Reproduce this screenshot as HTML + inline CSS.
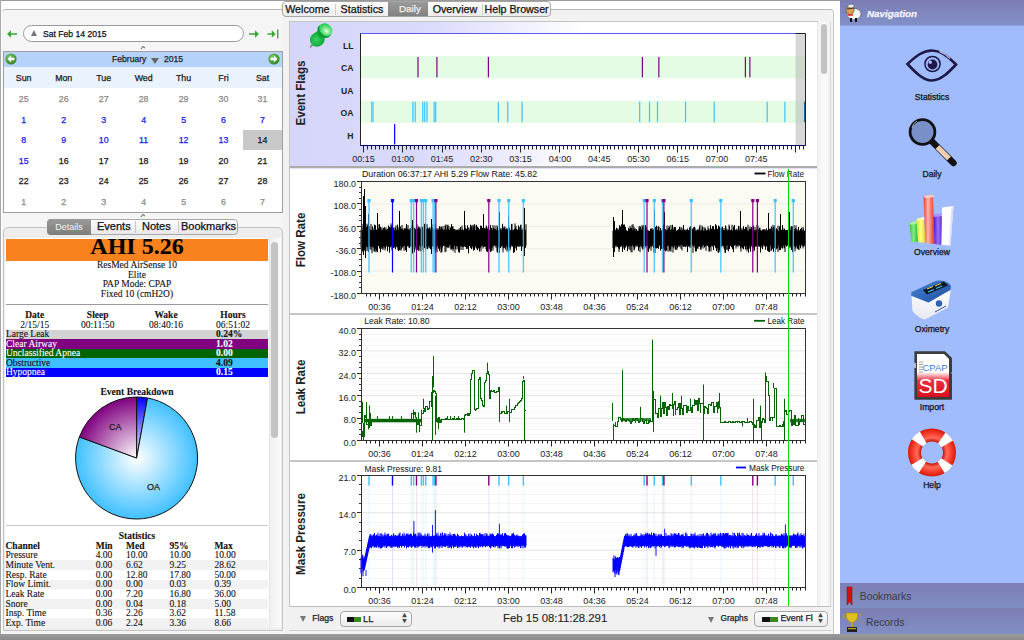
<!DOCTYPE html><html><head><meta charset="utf-8"><style>
*{margin:0;padding:0;box-sizing:border-box}
html,body{width:1024px;height:640px;overflow:hidden;background:#fff;font-family:'Liberation Sans', sans-serif;}
.abs{position:absolute}
.t{position:absolute;white-space:nowrap;line-height:1;-webkit-text-stroke:0.25px currentColor}
text{-webkit-text-stroke:0.25px currentColor}
</style></head><body>

<div class="abs" style="left:0;top:0;width:1024px;height:1px;background:#9a9a9a"></div>
<div class="abs" style="left:0;top:0;width:1px;height:640px;background:#a8a8a8"></div>
<div class="abs" style="left:0;top:634px;width:1024px;height:6px;background:linear-gradient(#9c9c9c,#8a8a8a)"></div>
<div class="abs" style="left:2px;top:9px;width:281px;height:625px;background:#f5f5f5;border-top:1px solid #b4b4b4;border-radius:4px 0 0 0"></div>
<svg class="abs" style="left:6px;top:29px" width="12" height="10" viewBox="0 0 12 10"><path d="M1 5 L5 1.2 L5 4.3 L11 4.3 L11 5.7 L5 5.7 L5 8.8 Z" fill="#38a838"/></svg>
<div class="abs" style="left:23px;top:25px;width:221px;height:17px;border:1px solid #9a9a9a;border-radius:9px;background:#fff"></div>
<div class="abs" style="left:31px;top:30px;width:0;height:0;border-left:3.5px solid transparent;border-right:3.5px solid transparent;border-bottom:6px solid #777"></div>
<div class="t" style="left:43px;top:29.5px;font-size:8.6px;color:#111">Sat Feb 14 2015</div>
<svg class="abs" style="left:248px;top:29px" width="12" height="10" viewBox="0 0 12 10"><path d="M11 5 L7 1.2 L7 4.3 L1 4.3 L1 5.7 L7 5.7 L7 8.8 Z" fill="#38a838"/></svg>
<svg class="abs" style="left:267px;top:29px" width="13" height="10" viewBox="0 0 13 10"><path d="M8.6 5 L4.8 1.2 L4.8 4.3 L0.5 4.3 L0.5 5.7 L4.8 5.7 L4.8 8.8 Z" fill="#38a838"/><rect x="10" y="0.5" width="1.4" height="9" fill="#38a838"/></svg>
<div class="abs" style="left:3px;top:51px;width:280px;height:162px;border:1px solid #a0a0a0;background:#fff"></div>
<div class="abs" style="left:4px;top:52px;width:278px;height:15px;background:#b4d2fa"></div>
<div class="abs" style="left:4px;top:67px;width:278px;height:21px;background:#eaf2fd"></div>
<svg class="abs" style="left:5px;top:53px" width="12" height="12" viewBox="0 0 12 12"><defs><radialGradient id="g11" cx="40%" cy="35%" r="70%"><stop offset="0" stop-color="#7fd06a"/><stop offset="1" stop-color="#2f7d1e"/></radialGradient></defs><circle cx="6" cy="6" r="5.6" fill="url(#g11)"/><path d="M2.5 6 L6 2.8 L6 4.8 L9.5 4.8 L9.5 7.2 L6 7.2 L6 9.2 Z" fill="#fff"/></svg>
<svg class="abs" style="left:268px;top:53px" width="12" height="12" viewBox="0 0 12 12"><defs><radialGradient id="g274" cx="40%" cy="35%" r="70%"><stop offset="0" stop-color="#7fd06a"/><stop offset="1" stop-color="#2f7d1e"/></radialGradient></defs><circle cx="6" cy="6" r="5.6" fill="url(#g274)"/><path d="M9.5 6 L6 2.8 L6 4.8 L2.5 4.8 L2.5 7.2 L6 7.2 L6 9.2 Z" fill="#fff"/></svg>
<div class="t" style="left:112px;top:55.3px;font-size:8.6px;color:#222">February</div>
<div class="abs" style="left:151px;top:58px;width:0;height:0;border-left:4px solid transparent;border-right:4px solid transparent;border-top:6px solid #666"></div>
<div class="t" style="left:164px;top:55.3px;font-size:8.6px;color:#222">2015</div>
<div class="t" style="left:3.6999999999999993px;width:40px;text-align:center;top:74.1px;font-size:8.8px;color:#1a1a1a">Sun</div>
<div class="t" style="left:43.7px;width:40px;text-align:center;top:74.1px;font-size:8.8px;color:#1a1a1a">Mon</div>
<div class="t" style="left:83.7px;width:40px;text-align:center;top:74.1px;font-size:8.8px;color:#1a1a1a">Tue</div>
<div class="t" style="left:123.6px;width:40px;text-align:center;top:74.1px;font-size:8.8px;color:#1a1a1a">Wed</div>
<div class="t" style="left:163.6px;width:40px;text-align:center;top:74.1px;font-size:8.8px;color:#1a1a1a">Thu</div>
<div class="t" style="left:203.5px;width:40px;text-align:center;top:74.1px;font-size:8.8px;color:#1a1a1a">Fri</div>
<div class="t" style="left:242.5px;width:40px;text-align:center;top:74.1px;font-size:8.8px;color:#1a1a1a">Sat</div>
<div class="abs" style="left:243px;top:130px;width:39px;height:20px;background:#c8c8c8"></div>
<div class="t" style="left:3.6999999999999993px;width:40px;text-align:center;top:95.2px;font-size:8.8px;color:#8a8a8a">25</div>
<div class="t" style="left:43.7px;width:40px;text-align:center;top:95.2px;font-size:8.8px;color:#8a8a8a">26</div>
<div class="t" style="left:83.7px;width:40px;text-align:center;top:95.2px;font-size:8.8px;color:#8a8a8a">27</div>
<div class="t" style="left:123.6px;width:40px;text-align:center;top:95.2px;font-size:8.8px;color:#8a8a8a">28</div>
<div class="t" style="left:163.6px;width:40px;text-align:center;top:95.2px;font-size:8.8px;color:#8a8a8a">29</div>
<div class="t" style="left:203.5px;width:40px;text-align:center;top:95.2px;font-size:8.8px;color:#8a8a8a">30</div>
<div class="t" style="left:242.5px;width:40px;text-align:center;top:95.2px;font-size:8.8px;color:#8a8a8a">31</div>
<div class="t" style="left:3.6999999999999993px;width:40px;text-align:center;top:115.8px;font-size:8.8px;color:#1a1aee">1</div>
<div class="t" style="left:43.7px;width:40px;text-align:center;top:115.8px;font-size:8.8px;color:#1a1aee">2</div>
<div class="t" style="left:83.7px;width:40px;text-align:center;top:115.8px;font-size:8.8px;color:#1a1aee">3</div>
<div class="t" style="left:123.6px;width:40px;text-align:center;top:115.8px;font-size:8.8px;color:#1a1aee">4</div>
<div class="t" style="left:163.6px;width:40px;text-align:center;top:115.8px;font-size:8.8px;color:#1a1aee">5</div>
<div class="t" style="left:203.5px;width:40px;text-align:center;top:115.8px;font-size:8.8px;color:#1a1aee">6</div>
<div class="t" style="left:242.5px;width:40px;text-align:center;top:115.8px;font-size:8.8px;color:#1a1aee">7</div>
<div class="t" style="left:3.6999999999999993px;width:40px;text-align:center;top:136.3px;font-size:8.8px;color:#1a1aee">8</div>
<div class="t" style="left:43.7px;width:40px;text-align:center;top:136.3px;font-size:8.8px;color:#1a1aee">9</div>
<div class="t" style="left:83.7px;width:40px;text-align:center;top:136.3px;font-size:8.8px;color:#1a1aee">10</div>
<div class="t" style="left:123.6px;width:40px;text-align:center;top:136.3px;font-size:8.8px;color:#1a1aee">11</div>
<div class="t" style="left:163.6px;width:40px;text-align:center;top:136.3px;font-size:8.8px;color:#1a1aee">12</div>
<div class="t" style="left:203.5px;width:40px;text-align:center;top:136.3px;font-size:8.8px;color:#1a1aee">13</div>
<div class="t" style="left:242.5px;width:40px;text-align:center;top:136.3px;font-size:8.8px;color:#151515">14</div>
<div class="t" style="left:3.6999999999999993px;width:40px;text-align:center;top:156.8px;font-size:8.8px;color:#1a1aee">15</div>
<div class="t" style="left:43.7px;width:40px;text-align:center;top:156.8px;font-size:8.8px;color:#151515">16</div>
<div class="t" style="left:83.7px;width:40px;text-align:center;top:156.8px;font-size:8.8px;color:#151515">17</div>
<div class="t" style="left:123.6px;width:40px;text-align:center;top:156.8px;font-size:8.8px;color:#151515">18</div>
<div class="t" style="left:163.6px;width:40px;text-align:center;top:156.8px;font-size:8.8px;color:#151515">19</div>
<div class="t" style="left:203.5px;width:40px;text-align:center;top:156.8px;font-size:8.8px;color:#151515">20</div>
<div class="t" style="left:242.5px;width:40px;text-align:center;top:156.8px;font-size:8.8px;color:#151515">21</div>
<div class="t" style="left:3.6999999999999993px;width:40px;text-align:center;top:177.4px;font-size:8.8px;color:#151515">22</div>
<div class="t" style="left:43.7px;width:40px;text-align:center;top:177.4px;font-size:8.8px;color:#151515">23</div>
<div class="t" style="left:83.7px;width:40px;text-align:center;top:177.4px;font-size:8.8px;color:#151515">24</div>
<div class="t" style="left:123.6px;width:40px;text-align:center;top:177.4px;font-size:8.8px;color:#151515">25</div>
<div class="t" style="left:163.6px;width:40px;text-align:center;top:177.4px;font-size:8.8px;color:#151515">26</div>
<div class="t" style="left:203.5px;width:40px;text-align:center;top:177.4px;font-size:8.8px;color:#151515">27</div>
<div class="t" style="left:242.5px;width:40px;text-align:center;top:177.4px;font-size:8.8px;color:#151515">28</div>
<div class="t" style="left:3.6999999999999993px;width:40px;text-align:center;top:198.0px;font-size:8.8px;color:#8a8a8a">1</div>
<div class="t" style="left:43.7px;width:40px;text-align:center;top:198.0px;font-size:8.8px;color:#8a8a8a">2</div>
<div class="t" style="left:83.7px;width:40px;text-align:center;top:198.0px;font-size:8.8px;color:#8a8a8a">3</div>
<div class="t" style="left:123.6px;width:40px;text-align:center;top:198.0px;font-size:8.8px;color:#8a8a8a">4</div>
<div class="t" style="left:163.6px;width:40px;text-align:center;top:198.0px;font-size:8.8px;color:#8a8a8a">5</div>
<div class="t" style="left:203.5px;width:40px;text-align:center;top:198.0px;font-size:8.8px;color:#8a8a8a">6</div>
<div class="t" style="left:242.5px;width:40px;text-align:center;top:198.0px;font-size:8.8px;color:#8a8a8a">7</div>
<svg class="abs" style="left:140px;top:45px" width="6" height="5"><path d="M1 4 L3 1.5 L5 3" stroke="#777" stroke-width="1.1" fill="none"/></svg>
<svg class="abs" style="left:140px;top:213px" width="6" height="5"><path d="M1 4 L3 1.5 L5 3" stroke="#777" stroke-width="1.1" fill="none"/></svg>
<div class="abs" style="left:3px;top:227px;width:280px;height:404px;border:1px solid #c4c4c4;border-radius:5px 5px 0 0;background:#ededed"></div>
<div class="abs" style="left:47px;top:219px;width:191px;height:16px;border:1px solid #a8a8a8;border-radius:4px;background:linear-gradient(#fdfdfd,#e8e8e8)"></div>
<div class="abs" style="left:47px;top:219px;width:44px;height:16px;border-radius:4px 0 0 4px;background:linear-gradient(#9a9a9a,#7d7d7d)"></div>
<div class="t" style="left:47px;width:44px;text-align:center;top:222.5px;font-size:9px;color:#f4f4f4;-webkit-text-stroke:0">Details</div>
<div class="t" style="left:97px;top:221px;font-size:11px;color:#111">Events</div>
<div class="abs" style="left:135px;top:221px;width:1px;height:12px;background:#c8c8c8"></div>
<div class="t" style="left:142px;top:221px;font-size:11px;color:#111">Notes</div>
<div class="abs" style="left:178px;top:221px;width:1px;height:12px;background:#c8c8c8"></div>
<div class="t" style="left:181px;top:221px;font-size:11px;color:#111">Bookmarks</div>
<div class="abs" style="left:5px;top:238px;width:276px;height:390px;background:#fff"></div>
<div class="abs" style="left:269px;top:238px;width:12px;height:390px;background:linear-gradient(90deg,#f0f0f0,#fafafa);border-left:1px solid #e4e4e4"></div>
<div class="abs" style="left:271px;top:242px;width:7px;height:196px;border-radius:4px;background:#c3c3c3"></div>
<div class="abs" style="left:6px;top:239px;width:262px;height:22px;background:#fa821e"></div>
<div class="t" style="left:6px;width:262px;text-align:center;top:234px;font-family:'Liberation Serif', serif;-webkit-text-stroke:0.1px currentColor;font-weight:bold;font-size:24px;color:#000">AHI 5.26</div>
<div class="t" style="left:6px;width:262px;text-align:center;top:260.0px;font-family:'Liberation Serif', serif;-webkit-text-stroke:0.1px currentColor;margin-top:1px;font-size:9.5px;color:#111">ResMed AirSense 10</div>
<div class="t" style="left:6px;width:262px;text-align:center;top:269.6px;font-family:'Liberation Serif', serif;-webkit-text-stroke:0.1px currentColor;margin-top:1px;font-size:9.5px;color:#111">Elite</div>
<div class="t" style="left:6px;width:262px;text-align:center;top:279.2px;font-family:'Liberation Serif', serif;-webkit-text-stroke:0.1px currentColor;margin-top:1px;font-size:9.5px;color:#111">PAP Mode: CPAP</div>
<div class="t" style="left:6px;width:262px;text-align:center;top:288.8px;font-family:'Liberation Serif', serif;-webkit-text-stroke:0.1px currentColor;margin-top:1px;font-size:9.5px;color:#111">Fixed 10 (cmH2O)</div>
<div class="abs" style="left:6px;top:304px;width:262px;height:1px;background:#9a9a9a"></div>
<div class="t" style="left:-5.299999999999997px;width:80px;text-align:center;top:310px;font-family:'Liberation Serif', serif;-webkit-text-stroke:0.1px currentColor;margin-top:1px;font-weight:bold;font-size:9.5px;color:#111">Date</div>
<div class="t" style="left:-5.299999999999997px;width:80px;text-align:center;top:319.5px;font-family:'Liberation Serif', serif;-webkit-text-stroke:0.1px currentColor;margin-top:1px;font-size:9.5px;color:#111">2/15/15</div>
<div class="t" style="left:57.7px;width:80px;text-align:center;top:310px;font-family:'Liberation Serif', serif;-webkit-text-stroke:0.1px currentColor;margin-top:1px;font-weight:bold;font-size:9.5px;color:#111">Sleep</div>
<div class="t" style="left:57.7px;width:80px;text-align:center;top:319.5px;font-family:'Liberation Serif', serif;-webkit-text-stroke:0.1px currentColor;margin-top:1px;font-size:9.5px;color:#111">00:11:50</div>
<div class="t" style="left:126px;width:80px;text-align:center;top:310px;font-family:'Liberation Serif', serif;-webkit-text-stroke:0.1px currentColor;margin-top:1px;font-weight:bold;font-size:9.5px;color:#111">Wake</div>
<div class="t" style="left:126px;width:80px;text-align:center;top:319.5px;font-family:'Liberation Serif', serif;-webkit-text-stroke:0.1px currentColor;margin-top:1px;font-size:9.5px;color:#111">08:40:16</div>
<div class="t" style="left:193px;width:80px;text-align:center;top:310px;font-family:'Liberation Serif', serif;-webkit-text-stroke:0.1px currentColor;margin-top:1px;font-weight:bold;font-size:9.5px;color:#111">Hours</div>
<div class="t" style="left:193px;width:80px;text-align:center;top:319.5px;font-family:'Liberation Serif', serif;-webkit-text-stroke:0.1px currentColor;margin-top:1px;font-size:9.5px;color:#111">06:51:02</div>
<div class="abs" style="left:6px;top:329.7px;width:262px;height:9.6px;background:#d3d3d3"></div>
<div class="t" style="left:6px;top:329.1px;font-family:'Liberation Serif', serif;-webkit-text-stroke:0.1px currentColor;margin-top:1px;font-size:9.5px;color:#111">Large Leak</div>
<div class="t" style="left:216px;top:329.1px;font-family:'Liberation Serif', serif;-webkit-text-stroke:0.1px currentColor;margin-top:1px;font-weight:bold;font-size:9.5px;color:#111">0.24%</div>
<div class="abs" style="left:6px;top:339.2px;width:262px;height:9.6px;background:#800080"></div>
<div class="t" style="left:6px;top:338.6px;font-family:'Liberation Serif', serif;-webkit-text-stroke:0.1px currentColor;margin-top:1px;font-size:9.5px;color:#fff">Clear Airway</div>
<div class="t" style="left:216px;top:338.6px;font-family:'Liberation Serif', serif;-webkit-text-stroke:0.1px currentColor;margin-top:1px;font-weight:bold;font-size:9.5px;color:#fff">1.02</div>
<div class="abs" style="left:6px;top:348.7px;width:262px;height:9.6px;background:#006400"></div>
<div class="t" style="left:6px;top:348.1px;font-family:'Liberation Serif', serif;-webkit-text-stroke:0.1px currentColor;margin-top:1px;font-size:9.5px;color:#fff">Unclassified Apnea</div>
<div class="t" style="left:216px;top:348.1px;font-family:'Liberation Serif', serif;-webkit-text-stroke:0.1px currentColor;margin-top:1px;font-weight:bold;font-size:9.5px;color:#fff">0.00</div>
<div class="abs" style="left:6px;top:358.1px;width:262px;height:9.6px;background:#40c0ff"></div>
<div class="t" style="left:6px;top:357.5px;font-family:'Liberation Serif', serif;-webkit-text-stroke:0.1px currentColor;margin-top:1px;font-size:9.5px;color:#111">Obstructive</div>
<div class="t" style="left:216px;top:357.5px;font-family:'Liberation Serif', serif;-webkit-text-stroke:0.1px currentColor;margin-top:1px;font-weight:bold;font-size:9.5px;color:#111">4.09</div>
<div class="abs" style="left:6px;top:367.6px;width:262px;height:9.6px;background:#0000ff"></div>
<div class="t" style="left:6px;top:367.0px;font-family:'Liberation Serif', serif;-webkit-text-stroke:0.1px currentColor;margin-top:1px;font-size:9.5px;color:#fff">Hypopnea</div>
<div class="t" style="left:216px;top:367.0px;font-family:'Liberation Serif', serif;-webkit-text-stroke:0.1px currentColor;margin-top:1px;font-weight:bold;font-size:9.5px;color:#fff">0.15</div>
<div class="t" style="left:6px;width:262px;text-align:center;top:386.5px;font-family:'Liberation Serif', serif;-webkit-text-stroke:0.1px currentColor;margin-top:1px;font-weight:bold;font-size:9.5px;color:#111">Event Breakdown</div>
<svg class="abs" style="left:0;top:0" width="280" height="640">
<defs>
<radialGradient id="pgOA" gradientUnits="userSpaceOnUse" cx="136.6" cy="458" r="61"><stop offset="0" stop-color="#ffffff"/><stop offset="1" stop-color="#40c0ff"/></radialGradient>
<radialGradient id="pgCA" gradientUnits="userSpaceOnUse" cx="136.6" cy="458" r="61"><stop offset="0" stop-color="#ffffff"/><stop offset="1" stop-color="#800080"/></radialGradient>
<radialGradient id="pgH" gradientUnits="userSpaceOnUse" cx="136.6" cy="458" r="61"><stop offset="0" stop-color="#ffffff"/><stop offset="1" stop-color="#0000ff"/></radialGradient>
</defs>
<path d="M136.6,458 L136.60,397.00 A61,61 0 0 1 147.51,397.98 Z" fill="url(#pgH)" stroke="#111" stroke-width="1"/>
<path d="M136.6,458 L147.51,397.98 A61,61 0 1 1 79.35,436.94 Z" fill="url(#pgOA)" stroke="#111" stroke-width="1"/>
<path d="M136.6,458 L79.35,436.94 A61,61 0 0 1 136.60,397.00 Z" fill="url(#pgCA)" stroke="#111" stroke-width="1"/>
</svg>
<div class="t" style="left:109px;top:423px;font-size:9px;color:#222">CA</div>
<div class="t" style="left:147px;top:483px;font-size:9px;color:#222">OA</div>
<div class="abs" style="left:6px;top:525px;width:262px;height:1px;background:#c8c8c8"></div>
<div class="t" style="left:6px;width:262px;text-align:center;top:531px;font-family:'Liberation Serif', serif;-webkit-text-stroke:0.1px currentColor;margin-top:1px;font-weight:bold;font-size:9.5px;color:#111">Statistics</div>
<div class="t" style="left:5.5px;top:540.7px;font-family:'Liberation Serif', serif;-webkit-text-stroke:0.1px currentColor;margin-top:1px;font-weight:bold;font-size:9.5px;color:#111">Channel</div>
<div class="t" style="left:95.7px;top:540.7px;font-family:'Liberation Serif', serif;-webkit-text-stroke:0.1px currentColor;margin-top:1px;font-weight:bold;font-size:9.5px;color:#111">Min</div>
<div class="t" style="left:126px;top:540.7px;font-family:'Liberation Serif', serif;-webkit-text-stroke:0.1px currentColor;margin-top:1px;font-weight:bold;font-size:9.5px;color:#111">Med</div>
<div class="t" style="left:169.4px;top:540.7px;font-family:'Liberation Serif', serif;-webkit-text-stroke:0.1px currentColor;margin-top:1px;font-weight:bold;font-size:9.5px;color:#111">95%</div>
<div class="t" style="left:214.4px;top:540.7px;font-family:'Liberation Serif', serif;-webkit-text-stroke:0.1px currentColor;margin-top:1px;font-weight:bold;font-size:9.5px;color:#111">Max</div>
<div class="t" style="left:5.5px;top:550.4px;font-family:'Liberation Serif', serif;-webkit-text-stroke:0.1px currentColor;margin-top:1px;font-weight:normal;font-size:9.5px;color:#111">Pressure</div>
<div class="t" style="left:95.7px;top:550.4px;font-family:'Liberation Serif', serif;-webkit-text-stroke:0.1px currentColor;margin-top:1px;font-weight:normal;font-size:9.5px;color:#111">4.00</div>
<div class="t" style="left:126px;top:550.4px;font-family:'Liberation Serif', serif;-webkit-text-stroke:0.1px currentColor;margin-top:1px;font-weight:normal;font-size:9.5px;color:#111">10.00</div>
<div class="t" style="left:169.4px;top:550.4px;font-family:'Liberation Serif', serif;-webkit-text-stroke:0.1px currentColor;margin-top:1px;font-weight:normal;font-size:9.5px;color:#111">10.00</div>
<div class="t" style="left:214.4px;top:550.4px;font-family:'Liberation Serif', serif;-webkit-text-stroke:0.1px currentColor;margin-top:1px;font-weight:normal;font-size:9.5px;color:#111">10.00</div>
<div class="abs" style="left:6px;top:560.3px;width:262px;height:9.6px;background:#f2f2f2"></div>
<div class="t" style="left:5.5px;top:560.0px;font-family:'Liberation Serif', serif;-webkit-text-stroke:0.1px currentColor;margin-top:1px;font-weight:normal;font-size:9.5px;color:#111">Minute Vent.</div>
<div class="t" style="left:95.7px;top:560.0px;font-family:'Liberation Serif', serif;-webkit-text-stroke:0.1px currentColor;margin-top:1px;font-weight:normal;font-size:9.5px;color:#111">0.00</div>
<div class="t" style="left:126px;top:560.0px;font-family:'Liberation Serif', serif;-webkit-text-stroke:0.1px currentColor;margin-top:1px;font-weight:normal;font-size:9.5px;color:#111">6.62</div>
<div class="t" style="left:169.4px;top:560.0px;font-family:'Liberation Serif', serif;-webkit-text-stroke:0.1px currentColor;margin-top:1px;font-weight:normal;font-size:9.5px;color:#111">9.25</div>
<div class="t" style="left:214.4px;top:560.0px;font-family:'Liberation Serif', serif;-webkit-text-stroke:0.1px currentColor;margin-top:1px;font-weight:normal;font-size:9.5px;color:#111">28.62</div>
<div class="t" style="left:5.5px;top:569.7px;font-family:'Liberation Serif', serif;-webkit-text-stroke:0.1px currentColor;margin-top:1px;font-weight:normal;font-size:9.5px;color:#111">Resp. Rate</div>
<div class="t" style="left:95.7px;top:569.7px;font-family:'Liberation Serif', serif;-webkit-text-stroke:0.1px currentColor;margin-top:1px;font-weight:normal;font-size:9.5px;color:#111">0.00</div>
<div class="t" style="left:126px;top:569.7px;font-family:'Liberation Serif', serif;-webkit-text-stroke:0.1px currentColor;margin-top:1px;font-weight:normal;font-size:9.5px;color:#111">12.80</div>
<div class="t" style="left:169.4px;top:569.7px;font-family:'Liberation Serif', serif;-webkit-text-stroke:0.1px currentColor;margin-top:1px;font-weight:normal;font-size:9.5px;color:#111">17.80</div>
<div class="t" style="left:214.4px;top:569.7px;font-family:'Liberation Serif', serif;-webkit-text-stroke:0.1px currentColor;margin-top:1px;font-weight:normal;font-size:9.5px;color:#111">50.00</div>
<div class="abs" style="left:6px;top:579.6px;width:262px;height:9.6px;background:#f2f2f2"></div>
<div class="t" style="left:5.5px;top:579.3px;font-family:'Liberation Serif', serif;-webkit-text-stroke:0.1px currentColor;margin-top:1px;font-weight:normal;font-size:9.5px;color:#111">Flow Limit.</div>
<div class="t" style="left:95.7px;top:579.3px;font-family:'Liberation Serif', serif;-webkit-text-stroke:0.1px currentColor;margin-top:1px;font-weight:normal;font-size:9.5px;color:#111">0.00</div>
<div class="t" style="left:126px;top:579.3px;font-family:'Liberation Serif', serif;-webkit-text-stroke:0.1px currentColor;margin-top:1px;font-weight:normal;font-size:9.5px;color:#111">0.00</div>
<div class="t" style="left:169.4px;top:579.3px;font-family:'Liberation Serif', serif;-webkit-text-stroke:0.1px currentColor;margin-top:1px;font-weight:normal;font-size:9.5px;color:#111">0.03</div>
<div class="t" style="left:214.4px;top:579.3px;font-family:'Liberation Serif', serif;-webkit-text-stroke:0.1px currentColor;margin-top:1px;font-weight:normal;font-size:9.5px;color:#111">0.39</div>
<div class="t" style="left:5.5px;top:589.0px;font-family:'Liberation Serif', serif;-webkit-text-stroke:0.1px currentColor;margin-top:1px;font-weight:normal;font-size:9.5px;color:#111">Leak Rate</div>
<div class="t" style="left:95.7px;top:589.0px;font-family:'Liberation Serif', serif;-webkit-text-stroke:0.1px currentColor;margin-top:1px;font-weight:normal;font-size:9.5px;color:#111">0.00</div>
<div class="t" style="left:126px;top:589.0px;font-family:'Liberation Serif', serif;-webkit-text-stroke:0.1px currentColor;margin-top:1px;font-weight:normal;font-size:9.5px;color:#111">7.20</div>
<div class="t" style="left:169.4px;top:589.0px;font-family:'Liberation Serif', serif;-webkit-text-stroke:0.1px currentColor;margin-top:1px;font-weight:normal;font-size:9.5px;color:#111">16.80</div>
<div class="t" style="left:214.4px;top:589.0px;font-family:'Liberation Serif', serif;-webkit-text-stroke:0.1px currentColor;margin-top:1px;font-weight:normal;font-size:9.5px;color:#111">36.00</div>
<div class="abs" style="left:6px;top:599.0px;width:262px;height:9.6px;background:#f2f2f2"></div>
<div class="t" style="left:5.5px;top:598.7px;font-family:'Liberation Serif', serif;-webkit-text-stroke:0.1px currentColor;margin-top:1px;font-weight:normal;font-size:9.5px;color:#111">Snore</div>
<div class="t" style="left:95.7px;top:598.7px;font-family:'Liberation Serif', serif;-webkit-text-stroke:0.1px currentColor;margin-top:1px;font-weight:normal;font-size:9.5px;color:#111">0.00</div>
<div class="t" style="left:126px;top:598.7px;font-family:'Liberation Serif', serif;-webkit-text-stroke:0.1px currentColor;margin-top:1px;font-weight:normal;font-size:9.5px;color:#111">0.04</div>
<div class="t" style="left:169.4px;top:598.7px;font-family:'Liberation Serif', serif;-webkit-text-stroke:0.1px currentColor;margin-top:1px;font-weight:normal;font-size:9.5px;color:#111">0.18</div>
<div class="t" style="left:214.4px;top:598.7px;font-family:'Liberation Serif', serif;-webkit-text-stroke:0.1px currentColor;margin-top:1px;font-weight:normal;font-size:9.5px;color:#111">5.00</div>
<div class="t" style="left:5.5px;top:608.3px;font-family:'Liberation Serif', serif;-webkit-text-stroke:0.1px currentColor;margin-top:1px;font-weight:normal;font-size:9.5px;color:#111">Insp. Time</div>
<div class="t" style="left:95.7px;top:608.3px;font-family:'Liberation Serif', serif;-webkit-text-stroke:0.1px currentColor;margin-top:1px;font-weight:normal;font-size:9.5px;color:#111">0.36</div>
<div class="t" style="left:126px;top:608.3px;font-family:'Liberation Serif', serif;-webkit-text-stroke:0.1px currentColor;margin-top:1px;font-weight:normal;font-size:9.5px;color:#111">2.26</div>
<div class="t" style="left:169.4px;top:608.3px;font-family:'Liberation Serif', serif;-webkit-text-stroke:0.1px currentColor;margin-top:1px;font-weight:normal;font-size:9.5px;color:#111">3.62</div>
<div class="t" style="left:214.4px;top:608.3px;font-family:'Liberation Serif', serif;-webkit-text-stroke:0.1px currentColor;margin-top:1px;font-weight:normal;font-size:9.5px;color:#111">11.58</div>
<div class="abs" style="left:6px;top:618.3px;width:262px;height:9.6px;background:#f2f2f2"></div>
<div class="t" style="left:5.5px;top:618.0px;font-family:'Liberation Serif', serif;-webkit-text-stroke:0.1px currentColor;margin-top:1px;font-weight:normal;font-size:9.5px;color:#111">Exp. Time</div>
<div class="t" style="left:95.7px;top:618.0px;font-family:'Liberation Serif', serif;-webkit-text-stroke:0.1px currentColor;margin-top:1px;font-weight:normal;font-size:9.5px;color:#111">0.06</div>
<div class="t" style="left:126px;top:618.0px;font-family:'Liberation Serif', serif;-webkit-text-stroke:0.1px currentColor;margin-top:1px;font-weight:normal;font-size:9.5px;color:#111">2.24</div>
<div class="t" style="left:169.4px;top:618.0px;font-family:'Liberation Serif', serif;-webkit-text-stroke:0.1px currentColor;margin-top:1px;font-weight:normal;font-size:9.5px;color:#111">3.36</div>
<div class="t" style="left:214.4px;top:618.0px;font-family:'Liberation Serif', serif;-webkit-text-stroke:0.1px currentColor;margin-top:1px;font-weight:normal;font-size:9.5px;color:#111">8.66</div>
<div class="abs" style="left:283px;top:9px;width:551px;height:625px;background:#f2f2f2;border-top:1px solid #b8b8b8;border-right:1px solid #c8c8c8;border-radius:4px 4px 0 0"></div>
<div class="abs" style="left:834px;top:1px;width:6px;height:633px;background:#fff"></div>
<div class="abs" style="left:282px;top:1px;width:269px;height:16px;border:1px solid #a6a6a6;border-radius:4px;background:linear-gradient(#fefefe,#ececec)"></div>
<div class="abs" style="left:388px;top:2px;width:40px;height:14px;background:linear-gradient(#9a9a9a,#808080)"></div>
<div class="t" style="left:285.2px;top:3.5px;font-size:10.7px;color:#111">Welcome</div>
<div class="t" style="left:340.6px;top:3.5px;font-size:10.7px;color:#111">Statistics</div>
<div class="t" style="left:399px;top:3.5px;font-size:9.8px;color:#f0f0f0">Daily</div>
<div class="t" style="left:432.7px;top:3.5px;font-size:10.7px;color:#111">Overview</div>
<div class="t" style="left:484.5px;top:3.5px;font-size:10.7px;color:#111">Help Browser</div>
<div class="abs" style="left:334.5px;top:4px;width:1px;height:11px;background:#cfcfcf"></div>
<div class="abs" style="left:482px;top:4px;width:1px;height:11px;background:#cfcfcf"></div>
<div class="abs" style="left:289px;top:21px;width:529px;height:586px;border-left:1px solid #c4c4c4;border-top:1px solid #c4c4c4;background:#fff"></div>
<div class="abs" style="left:817px;top:22px;width:14px;height:584px;background:linear-gradient(90deg,#f2f2f2,#fbfbfb 60%,#f0f0f0);border-left:1px solid #e6e6e6;border-right:1px solid #d8d8d8"></div>
<div class="abs" style="left:821px;top:23.5px;width:6px;height:50px;border-radius:3px;background:#c2c2c2"></div>
<div class="abs" style="left:290px;top:22px;width:527px;height:144px;background:linear-gradient(90deg,#d6d6fb 0%,#d9d9fb 24%,#e8e8fd 38%,#f8f8ff 50%,#ffffff 56%)"></div>
<div class="abs" style="left:290px;top:166px;width:527px;height:2px;background:#acacac"></div>
<div class="abs" style="left:290px;top:168px;width:527px;height:1px;background:#e2e2fa"></div>
<div class="abs" style="left:290px;top:313px;width:527px;height:1.5px;background:#c6c6c6"></div>
<div class="abs" style="left:290px;top:460px;width:527px;height:1.5px;background:#c6c6c6"></div>
<div class="abs" style="left:289px;top:606px;width:542px;height:25px;background:#f1f1f1;border-top:1px solid #bdbdbd;border-bottom:1px solid #d0d0d0"></div>
<svg class="abs" style="left:0;top:0;font-family:'Liberation Sans', sans-serif" width="1024" height="640"><rect x="360.5" y="33.5" width="445.0" height="112.0" fill="#fff"/><rect x="361.0" y="55.90" width="444.0" height="22.40" fill="#e4fce4"/><rect x="361.0" y="100.70" width="444.0" height="22.40" fill="#e4fce4"/><rect x="795.5" y="33.5" width="10" height="112.0" fill="#b0b0b0" fill-opacity="0.5"/><rect x="371.17" y="101.70" width="1.2" height="20.40" fill="#40c0ff"/><rect x="394.05" y="124.10" width="1.2" height="20.40" fill="#0000ff"/><rect x="412.30" y="101.70" width="1.2" height="20.40" fill="#40c0ff"/><rect x="414.59" y="101.70" width="1.2" height="20.40" fill="#40c0ff"/><rect x="417.41" y="56.90" width="1.2" height="20.40" fill="#800080"/><rect x="422.18" y="101.70" width="1.2" height="20.40" fill="#40c0ff"/><rect x="424.13" y="101.70" width="1.2" height="20.40" fill="#40c0ff"/><rect x="426.37" y="101.70" width="1.2" height="20.40" fill="#40c0ff"/><rect x="433.57" y="101.70" width="1.2" height="20.40" fill="#40c0ff"/><rect x="435.13" y="101.70" width="1.2" height="20.40" fill="#40c0ff"/><rect x="436.30" y="56.90" width="1.2" height="20.40" fill="#800080"/><rect x="487.80" y="56.90" width="1.2" height="20.40" fill="#800080"/><rect x="497.73" y="101.70" width="1.2" height="20.40" fill="#40c0ff"/><rect x="507.17" y="101.70" width="1.2" height="20.40" fill="#40c0ff"/><rect x="521.48" y="101.70" width="1.2" height="20.40" fill="#40c0ff"/><rect x="639.08" y="101.70" width="1.2" height="20.40" fill="#40c0ff"/><rect x="641.80" y="56.90" width="1.2" height="20.40" fill="#800080"/><rect x="648.91" y="101.70" width="1.2" height="20.40" fill="#40c0ff"/><rect x="656.89" y="101.70" width="1.2" height="20.40" fill="#40c0ff"/><rect x="658.26" y="56.90" width="1.2" height="20.40" fill="#800080"/><rect x="684.93" y="101.70" width="1.2" height="20.40" fill="#40c0ff"/><rect x="713.65" y="101.70" width="1.2" height="20.40" fill="#40c0ff"/><rect x="744.80" y="56.90" width="1.2" height="20.40" fill="#800080"/><rect x="749.28" y="56.90" width="1.2" height="20.40" fill="#800080"/><rect x="766.61" y="101.70" width="1.2" height="20.40" fill="#40c0ff"/><rect x="784.23" y="101.70" width="1.2" height="20.40" fill="#40c0ff"/><rect x="372.57" y="101.70" width="1.0" height="20.40" fill="#40c0ff"/><rect x="804" y="101.70" width="1.4" height="20.40" fill="#1a6a9a"/><text x="353.5" y="49.0" font-size="8.6" text-anchor="end" font-weight="bold" fill="#222">LL</text><text x="353.5" y="71.39999999999999" font-size="8.6" text-anchor="end" font-weight="bold" fill="#222">CA</text><text x="353.5" y="93.8" font-size="8.6" text-anchor="end" font-weight="bold" fill="#222">UA</text><text x="353.5" y="116.19999999999999" font-size="8.6" text-anchor="end" font-weight="bold" fill="#222">OA</text><text x="353.5" y="138.60000000000002" font-size="8.6" text-anchor="end" font-weight="bold" fill="#222">H</text><path d="M360.5 145.5 L360.5 33.5 L805.5 33.5 L805.5 145.5 Z" fill="none" stroke="#222" stroke-width="1"/><line x1="361.0" y1="33.5" x2="795.5" y2="33.5" stroke="#5a5af8" stroke-width="1"/><line x1="360.5" y1="145.5" x2="805.5" y2="145.5" stroke="#000070" stroke-width="1.2"/><line x1="363.50" y1="145.5" x2="363.50" y2="152.5" stroke="#222" stroke-width="1"/><line x1="367.50" y1="145.5" x2="367.50" y2="149.5" stroke="#222" stroke-width="1"/><line x1="371.50" y1="145.5" x2="371.50" y2="149.5" stroke="#222" stroke-width="1"/><line x1="375.50" y1="145.5" x2="375.50" y2="149.5" stroke="#222" stroke-width="1"/><line x1="379.50" y1="145.5" x2="379.50" y2="149.5" stroke="#222" stroke-width="1"/><line x1="383.50" y1="145.5" x2="383.50" y2="149.5" stroke="#222" stroke-width="1"/><line x1="387.50" y1="145.5" x2="387.50" y2="149.5" stroke="#222" stroke-width="1"/><line x1="390.50" y1="145.5" x2="390.50" y2="149.5" stroke="#222" stroke-width="1"/><line x1="394.50" y1="145.5" x2="394.50" y2="149.5" stroke="#222" stroke-width="1"/><line x1="398.50" y1="145.5" x2="398.50" y2="149.5" stroke="#222" stroke-width="1"/><line x1="402.50" y1="145.5" x2="402.50" y2="152.5" stroke="#222" stroke-width="1"/><line x1="406.50" y1="145.5" x2="406.50" y2="149.5" stroke="#222" stroke-width="1"/><line x1="410.50" y1="145.5" x2="410.50" y2="149.5" stroke="#222" stroke-width="1"/><line x1="414.50" y1="145.5" x2="414.50" y2="149.5" stroke="#222" stroke-width="1"/><line x1="418.50" y1="145.5" x2="418.50" y2="149.5" stroke="#222" stroke-width="1"/><line x1="422.50" y1="145.5" x2="422.50" y2="149.5" stroke="#222" stroke-width="1"/><line x1="426.50" y1="145.5" x2="426.50" y2="149.5" stroke="#222" stroke-width="1"/><line x1="430.50" y1="145.5" x2="430.50" y2="149.5" stroke="#222" stroke-width="1"/><line x1="434.50" y1="145.5" x2="434.50" y2="149.5" stroke="#222" stroke-width="1"/><line x1="438.50" y1="145.5" x2="438.50" y2="149.5" stroke="#222" stroke-width="1"/><line x1="442.50" y1="145.5" x2="442.50" y2="152.5" stroke="#222" stroke-width="1"/><line x1="445.50" y1="145.5" x2="445.50" y2="149.5" stroke="#222" stroke-width="1"/><line x1="449.50" y1="145.5" x2="449.50" y2="149.5" stroke="#222" stroke-width="1"/><line x1="453.50" y1="145.5" x2="453.50" y2="149.5" stroke="#222" stroke-width="1"/><line x1="457.50" y1="145.5" x2="457.50" y2="149.5" stroke="#222" stroke-width="1"/><line x1="461.50" y1="145.5" x2="461.50" y2="149.5" stroke="#222" stroke-width="1"/><line x1="465.50" y1="145.5" x2="465.50" y2="149.5" stroke="#222" stroke-width="1"/><line x1="469.50" y1="145.5" x2="469.50" y2="149.5" stroke="#222" stroke-width="1"/><line x1="473.50" y1="145.5" x2="473.50" y2="149.5" stroke="#222" stroke-width="1"/><line x1="477.50" y1="145.5" x2="477.50" y2="149.5" stroke="#222" stroke-width="1"/><line x1="481.50" y1="145.5" x2="481.50" y2="152.5" stroke="#222" stroke-width="1"/><line x1="485.50" y1="145.5" x2="485.50" y2="149.5" stroke="#222" stroke-width="1"/><line x1="489.50" y1="145.5" x2="489.50" y2="149.5" stroke="#222" stroke-width="1"/><line x1="493.50" y1="145.5" x2="493.50" y2="149.5" stroke="#222" stroke-width="1"/><line x1="497.50" y1="145.5" x2="497.50" y2="149.5" stroke="#222" stroke-width="1"/><line x1="500.50" y1="145.5" x2="500.50" y2="149.5" stroke="#222" stroke-width="1"/><line x1="504.50" y1="145.5" x2="504.50" y2="149.5" stroke="#222" stroke-width="1"/><line x1="508.50" y1="145.5" x2="508.50" y2="149.5" stroke="#222" stroke-width="1"/><line x1="512.50" y1="145.5" x2="512.50" y2="149.5" stroke="#222" stroke-width="1"/><line x1="516.50" y1="145.5" x2="516.50" y2="149.5" stroke="#222" stroke-width="1"/><line x1="520.50" y1="145.5" x2="520.50" y2="152.5" stroke="#222" stroke-width="1"/><line x1="524.50" y1="145.5" x2="524.50" y2="149.5" stroke="#222" stroke-width="1"/><line x1="528.50" y1="145.5" x2="528.50" y2="149.5" stroke="#222" stroke-width="1"/><line x1="532.50" y1="145.5" x2="532.50" y2="149.5" stroke="#222" stroke-width="1"/><line x1="536.50" y1="145.5" x2="536.50" y2="149.5" stroke="#222" stroke-width="1"/><line x1="540.50" y1="145.5" x2="540.50" y2="149.5" stroke="#222" stroke-width="1"/><line x1="544.50" y1="145.5" x2="544.50" y2="149.5" stroke="#222" stroke-width="1"/><line x1="548.50" y1="145.5" x2="548.50" y2="149.5" stroke="#222" stroke-width="1"/><line x1="552.50" y1="145.5" x2="552.50" y2="149.5" stroke="#222" stroke-width="1"/><line x1="555.50" y1="145.5" x2="555.50" y2="149.5" stroke="#222" stroke-width="1"/><line x1="559.50" y1="145.5" x2="559.50" y2="152.5" stroke="#222" stroke-width="1"/><line x1="563.50" y1="145.5" x2="563.50" y2="149.5" stroke="#222" stroke-width="1"/><line x1="567.50" y1="145.5" x2="567.50" y2="149.5" stroke="#222" stroke-width="1"/><line x1="571.50" y1="145.5" x2="571.50" y2="149.5" stroke="#222" stroke-width="1"/><line x1="575.50" y1="145.5" x2="575.50" y2="149.5" stroke="#222" stroke-width="1"/><line x1="579.50" y1="145.5" x2="579.50" y2="149.5" stroke="#222" stroke-width="1"/><line x1="583.50" y1="145.5" x2="583.50" y2="149.5" stroke="#222" stroke-width="1"/><line x1="587.50" y1="145.5" x2="587.50" y2="149.5" stroke="#222" stroke-width="1"/><line x1="591.50" y1="145.5" x2="591.50" y2="149.5" stroke="#222" stroke-width="1"/><line x1="595.50" y1="145.5" x2="595.50" y2="149.5" stroke="#222" stroke-width="1"/><line x1="599.50" y1="145.5" x2="599.50" y2="152.5" stroke="#222" stroke-width="1"/><line x1="603.50" y1="145.5" x2="603.50" y2="149.5" stroke="#222" stroke-width="1"/><line x1="607.50" y1="145.5" x2="607.50" y2="149.5" stroke="#222" stroke-width="1"/><line x1="610.50" y1="145.5" x2="610.50" y2="149.5" stroke="#222" stroke-width="1"/><line x1="614.50" y1="145.5" x2="614.50" y2="149.5" stroke="#222" stroke-width="1"/><line x1="618.50" y1="145.5" x2="618.50" y2="149.5" stroke="#222" stroke-width="1"/><line x1="622.50" y1="145.5" x2="622.50" y2="149.5" stroke="#222" stroke-width="1"/><line x1="626.50" y1="145.5" x2="626.50" y2="149.5" stroke="#222" stroke-width="1"/><line x1="630.50" y1="145.5" x2="630.50" y2="149.5" stroke="#222" stroke-width="1"/><line x1="634.50" y1="145.5" x2="634.50" y2="149.5" stroke="#222" stroke-width="1"/><line x1="638.50" y1="145.5" x2="638.50" y2="152.5" stroke="#222" stroke-width="1"/><line x1="642.50" y1="145.5" x2="642.50" y2="149.5" stroke="#222" stroke-width="1"/><line x1="646.50" y1="145.5" x2="646.50" y2="149.5" stroke="#222" stroke-width="1"/><line x1="650.50" y1="145.5" x2="650.50" y2="149.5" stroke="#222" stroke-width="1"/><line x1="654.50" y1="145.5" x2="654.50" y2="149.5" stroke="#222" stroke-width="1"/><line x1="658.50" y1="145.5" x2="658.50" y2="149.5" stroke="#222" stroke-width="1"/><line x1="662.50" y1="145.5" x2="662.50" y2="149.5" stroke="#222" stroke-width="1"/><line x1="665.50" y1="145.5" x2="665.50" y2="149.5" stroke="#222" stroke-width="1"/><line x1="669.50" y1="145.5" x2="669.50" y2="149.5" stroke="#222" stroke-width="1"/><line x1="673.50" y1="145.5" x2="673.50" y2="149.5" stroke="#222" stroke-width="1"/><line x1="677.50" y1="145.5" x2="677.50" y2="152.5" stroke="#222" stroke-width="1"/><line x1="681.50" y1="145.5" x2="681.50" y2="149.5" stroke="#222" stroke-width="1"/><line x1="685.50" y1="145.5" x2="685.50" y2="149.5" stroke="#222" stroke-width="1"/><line x1="689.50" y1="145.5" x2="689.50" y2="149.5" stroke="#222" stroke-width="1"/><line x1="693.50" y1="145.5" x2="693.50" y2="149.5" stroke="#222" stroke-width="1"/><line x1="697.50" y1="145.5" x2="697.50" y2="149.5" stroke="#222" stroke-width="1"/><line x1="701.50" y1="145.5" x2="701.50" y2="149.5" stroke="#222" stroke-width="1"/><line x1="705.50" y1="145.5" x2="705.50" y2="149.5" stroke="#222" stroke-width="1"/><line x1="709.50" y1="145.5" x2="709.50" y2="149.5" stroke="#222" stroke-width="1"/><line x1="713.50" y1="145.5" x2="713.50" y2="149.5" stroke="#222" stroke-width="1"/><line x1="717.50" y1="145.5" x2="717.50" y2="152.5" stroke="#222" stroke-width="1"/><line x1="720.50" y1="145.5" x2="720.50" y2="149.5" stroke="#222" stroke-width="1"/><line x1="724.50" y1="145.5" x2="724.50" y2="149.5" stroke="#222" stroke-width="1"/><line x1="728.50" y1="145.5" x2="728.50" y2="149.5" stroke="#222" stroke-width="1"/><line x1="732.50" y1="145.5" x2="732.50" y2="149.5" stroke="#222" stroke-width="1"/><line x1="736.50" y1="145.5" x2="736.50" y2="149.5" stroke="#222" stroke-width="1"/><line x1="740.50" y1="145.5" x2="740.50" y2="149.5" stroke="#222" stroke-width="1"/><line x1="744.50" y1="145.5" x2="744.50" y2="149.5" stroke="#222" stroke-width="1"/><line x1="748.50" y1="145.5" x2="748.50" y2="149.5" stroke="#222" stroke-width="1"/><line x1="752.50" y1="145.5" x2="752.50" y2="149.5" stroke="#222" stroke-width="1"/><line x1="756.50" y1="145.5" x2="756.50" y2="152.5" stroke="#222" stroke-width="1"/><line x1="760.50" y1="145.5" x2="760.50" y2="149.5" stroke="#222" stroke-width="1"/><line x1="764.50" y1="145.5" x2="764.50" y2="149.5" stroke="#222" stroke-width="1"/><line x1="768.50" y1="145.5" x2="768.50" y2="149.5" stroke="#222" stroke-width="1"/><line x1="772.50" y1="145.5" x2="772.50" y2="149.5" stroke="#222" stroke-width="1"/><line x1="775.50" y1="145.5" x2="775.50" y2="149.5" stroke="#222" stroke-width="1"/><line x1="779.50" y1="145.5" x2="779.50" y2="149.5" stroke="#222" stroke-width="1"/><line x1="783.50" y1="145.5" x2="783.50" y2="149.5" stroke="#222" stroke-width="1"/><line x1="787.50" y1="145.5" x2="787.50" y2="149.5" stroke="#222" stroke-width="1"/><line x1="791.50" y1="145.5" x2="791.50" y2="149.5" stroke="#222" stroke-width="1"/><line x1="795.50" y1="145.5" x2="795.50" y2="152.5" stroke="#222" stroke-width="1"/><line x1="799.50" y1="145.5" x2="799.50" y2="149.5" stroke="#222" stroke-width="1"/><line x1="803.50" y1="145.5" x2="803.50" y2="149.5" stroke="#222" stroke-width="1"/><text x="363.5" y="162.3" font-size="9" text-anchor="middle" font-weight="normal" fill="#222">00:15</text><text x="402.78" y="162.3" font-size="9" text-anchor="middle" font-weight="normal" fill="#222">01:00</text><text x="442.06" y="162.3" font-size="9" text-anchor="middle" font-weight="normal" fill="#222">01:45</text><text x="481.34000000000003" y="162.3" font-size="9" text-anchor="middle" font-weight="normal" fill="#222">02:30</text><text x="520.62" y="162.3" font-size="9" text-anchor="middle" font-weight="normal" fill="#222">03:15</text><text x="559.9" y="162.3" font-size="9" text-anchor="middle" font-weight="normal" fill="#222">04:00</text><text x="599.1800000000001" y="162.3" font-size="9" text-anchor="middle" font-weight="normal" fill="#222">04:45</text><text x="638.46" y="162.3" font-size="9" text-anchor="middle" font-weight="normal" fill="#222">05:30</text><text x="677.74" y="162.3" font-size="9" text-anchor="middle" font-weight="normal" fill="#222">06:15</text><text x="717.02" y="162.3" font-size="9" text-anchor="middle" font-weight="normal" fill="#222">07:00</text><text x="756.3" y="162.3" font-size="9" text-anchor="middle" font-weight="normal" fill="#222">07:45</text><text transform="translate(305.3,93) rotate(-90) scale(1,1.12)" font-size="11.6" font-weight="bold" text-anchor="middle" fill="#222">Event Flags</text><rect x="361.5" y="181.5" width="444.0" height="112.0" fill="#fbfbf3"/><line x1="361.5" y1="203.90" x2="805.5" y2="203.90" stroke="#ececdf" stroke-width="1"/><line x1="361.5" y1="226.30" x2="805.5" y2="226.30" stroke="#ececdf" stroke-width="1"/><line x1="361.5" y1="248.70" x2="805.5" y2="248.70" stroke="#ececdf" stroke-width="1"/><line x1="361.5" y1="271.10" x2="805.5" y2="271.10" stroke="#ececdf" stroke-width="1"/><path d="M361.0 229.6V247.7M361.5 228.4V247.9M362.0 227.4V250.3M362.5 230.4V250.9M363.0 224.1V252.4M363.5 230.1V246.1M364.0 229.5V246.0M364.5 229.2V250.6M365.0 228.7V248.9M365.5 224.1V252.8M366.0 229.4V246.4M366.5 227.0V246.7M367.0 223.7V251.2M367.5 225.5V247.1M368.0 230.5V248.6M368.5 230.7V246.0M369.0 229.7V246.5M369.5 226.3V245.8M370.0 229.6V249.2M370.5 229.8V247.0M371.0 223.9V249.8M371.5 230.4V246.4M372.0 229.8V253.2M372.5 226.3V246.8M373.0 229.9V247.8M373.5 230.0V246.9M374.0 227.9V251.5M374.5 224.6V250.8M375.0 226.5V251.6M375.5 225.2V248.5M376.0 229.9V252.3M376.5 230.0V250.7M377.0 229.5V249.6M377.5 228.5V251.1M378.0 224.2V246.1M378.5 228.7V245.8M379.0 228.1V245.2M379.5 224.2V248.5M380.0 229.5V245.1M380.5 226.7V252.3M381.0 228.7V248.8M381.5 230.5V247.1M382.0 227.2V248.6M382.5 230.0V248.4M383.0 229.7V250.0M383.5 228.0V246.4M384.0 230.8V247.9M384.5 227.2V246.4M385.0 228.6V250.4M385.5 230.2V248.4M386.0 227.4V246.7M386.5 229.6V245.4M387.0 230.5V245.6M387.5 228.9V251.2M388.0 230.4V246.3M388.5 225.4V246.7M389.0 230.5V246.8M389.5 226.9V252.7M390.0 228.7V246.1M390.5 227.7V246.8M391.0 223.4V247.5M391.5 225.6V245.5M392.0 229.1V250.5M392.5 229.4V245.9M393.0 230.3V245.7M393.5 228.2V248.0M394.0 227.3V246.2M394.5 230.5V247.4M395.0 230.1V246.3M395.5 227.8V249.3M396.0 225.5V245.4M396.5 230.3V246.4M397.0 229.9V247.4M397.5 224.7V247.3M398.0 227.2V250.2M398.5 230.6V251.0M399.0 228.3V249.6M399.5 225.1V246.4M400.0 228.4V250.4M400.5 226.5V246.0M401.0 229.2V250.5M401.5 229.1V249.1M402.0 225.0V247.7M402.5 229.7V247.2M403.0 228.2V247.3M403.5 230.1V246.0M404.0 230.6V250.8M404.5 228.3V245.8M405.0 228.6V245.6M405.5 229.4V250.2M406.0 227.4V245.7M406.5 224.0V251.9M407.0 230.5V246.3M407.5 228.6V246.1M408.0 225.1V246.3M408.5 230.2V246.1M409.0 229.1V247.9M409.5 229.8V247.7M410.0 228.4V246.9M410.5 228.2V245.6M411.0 228.2V247.3M411.5 225.9V245.5M412.0 224.8V245.7M412.5 230.4V253.5M413.0 229.6V249.8M413.5 226.2V247.2M414.0 228.7V249.2M414.5 228.0V252.2M415.0 228.8V249.5M415.5 229.6V246.2M416.0 228.5V247.8M416.5 230.5V245.2M417.0 224.2V245.1M417.5 228.8V249.8M418.0 228.8V247.4M418.5 226.8V250.8M419.0 226.5V247.0M419.5 229.2V245.2M420.0 227.3V251.1M420.5 228.7V246.9M421.0 230.2V251.4M421.5 226.5V246.2M422.0 227.6V249.9M422.5 226.8V245.7M423.0 230.4V246.2M423.5 230.1V252.4M424.0 227.6V247.9M424.5 223.9V248.1M425.0 224.1V245.3M425.5 229.3V247.0M426.0 229.1V245.2M426.5 229.0V247.2M427.0 224.1V248.9M427.5 227.6V249.2M428.0 229.7V247.0M428.5 228.5V245.7M429.0 228.5V248.3M429.5 227.4V247.4M430.0 229.4V246.1M430.5 230.0V249.2M431.0 227.4V245.1M431.5 230.1V251.7M432.0 224.1V245.4M432.5 227.6V246.6M433.0 228.2V245.7M433.5 230.0V246.1M434.0 229.1V249.0M434.5 228.6V246.7M435.0 224.0V252.7M435.5 230.5V251.3M436.0 229.7V245.9M436.5 228.5V248.7M437.0 230.4V252.3M437.5 229.9V245.7M438.0 228.0V246.2M438.5 230.2V248.6M439.0 229.1V247.3M439.5 226.3V251.1M440.0 226.4V248.6M440.5 229.6V246.1M441.0 227.4V252.9M441.5 226.7V252.0M442.0 229.7V251.7M442.5 228.6V247.4M443.0 226.1V245.4M443.5 230.4V245.9M444.0 229.6V245.4M444.5 229.7V245.6M445.0 225.3V252.2M445.5 226.0V246.3M446.0 224.3V251.6M446.5 229.4V246.5M447.0 230.4V247.7M447.5 225.4V247.4M448.0 224.7V246.0M448.5 229.1V247.6M449.0 226.2V245.3M449.5 230.5V245.2M450.0 229.7V248.1M450.5 227.4V245.6M451.0 228.5V250.0M451.5 224.1V248.7M452.0 227.5V249.2M452.5 226.4V248.3M453.0 226.4V251.2M453.5 229.0V249.2M454.0 229.5V245.1M454.5 229.1V245.8M455.0 229.2V252.8M455.5 230.5V248.9M456.0 230.3V246.5M456.5 229.8V246.0M457.0 230.0V249.5M457.5 229.6V245.8M458.0 230.1V247.6M458.5 230.4V251.6M459.0 228.5V252.7M459.5 230.6V252.4M460.0 228.3V246.8M460.5 227.0V246.0M461.0 229.7V250.0M461.5 229.9V246.0M462.0 225.6V246.8M462.5 229.4V247.2M463.0 230.6V250.1M463.5 230.4V246.5M464.0 229.5V246.9M464.5 225.9V246.2M465.0 225.2V246.0M465.5 228.1V247.0M466.0 229.2V246.4M466.5 228.8V249.0M467.0 230.1V246.0M467.5 225.3V248.7M468.0 227.2V246.0M468.5 230.6V253.3M469.0 227.8V246.0M469.5 229.6V246.1M470.0 230.2V246.0M470.5 224.7V247.9M471.0 225.5V246.1M471.5 227.1V249.2M472.0 225.3V248.3M472.5 230.0V246.2M473.0 224.8V246.6M473.5 226.4V250.7M474.0 229.2V245.4M474.5 224.1V249.9M475.0 230.0V246.1M475.5 230.2V246.1M476.0 225.5V247.8M476.5 224.8V247.6M477.0 230.7V249.1M477.5 226.7V250.1M478.0 227.4V246.1M478.5 228.1V248.5M479.0 229.1V246.4M479.5 230.2V251.5M480.0 228.9V245.4M480.5 225.6V247.7M481.0 229.5V251.4M481.5 225.9V246.3M482.0 230.8V245.2M482.5 227.8V245.9M483.0 229.8V248.5M483.5 229.6V247.1M484.0 228.3V246.0M484.5 228.5V246.8M485.0 228.0V245.6M485.5 229.1V246.4M486.0 226.6V249.0M486.5 225.7V251.0M487.0 228.4V251.6M487.5 229.0V252.1M488.0 227.3V251.4M488.5 226.8V246.7M489.0 230.1V247.0M489.5 230.2V249.3M490.0 229.4V247.1M490.5 225.1V252.1M491.0 228.9V250.0M491.5 227.9V251.2M492.0 230.7V248.1M492.5 229.7V246.7M493.0 225.0V250.6M493.5 227.6V245.1M494.0 230.2V246.6M494.5 228.7V245.3M495.0 225.5V246.0M495.5 229.4V245.2M496.0 229.6V247.9M496.5 230.5V245.9M497.0 225.3V251.6M497.5 227.2V252.6M498.0 230.2V246.5M498.5 230.2V245.6M499.0 229.9V248.5M499.5 230.5V245.9M500.0 229.3V247.8M500.5 229.2V248.0M501.0 227.8V245.7M501.5 230.5V246.4M502.0 229.4V247.1M502.5 223.8V245.3M503.0 229.4V252.4M503.5 228.2V248.3M504.0 226.4V246.9M504.5 227.9V247.8M505.0 226.6V246.1M505.5 229.5V249.5M506.0 229.6V247.1M506.5 228.9V245.3M507.0 227.9V251.6M507.5 230.1V247.3M508.0 229.3V249.7M508.5 228.7V247.9M509.0 229.6V246.4M509.5 227.6V247.3M510.0 229.8V250.7M510.5 230.5V248.6M511.0 230.0V247.0M511.5 224.1V245.3M512.0 223.8V245.4M512.5 230.7V246.4M513.0 229.3V246.6M513.5 230.5V252.8M514.0 230.0V246.3M514.5 228.9V252.2M515.0 223.4V248.3M515.5 227.5V245.4M516.0 225.9V248.0M516.5 229.2V250.4M517.0 229.6V246.3M517.5 229.7V245.9M518.0 230.3V246.7M518.5 225.4V246.3M519.0 227.0V247.0M519.5 229.9V245.5M520.0 226.9V246.4M520.5 224.9V246.1M521.0 224.7V245.7M521.5 230.0V251.0M522.0 228.5V245.9M522.5 230.3V246.3M523.0 229.8V247.2M523.5 227.4V245.8M524.0 229.8V245.6M524.5 229.7V246.9M525.0 229.4V246.9M525.5 230.3V247.9M526.0 224.2V245.6M613.0 230.8V248.0M613.5 226.2V246.0M614.0 229.3V246.3M614.5 230.0V247.2M615.0 229.5V246.5M615.5 230.3V245.3M616.0 230.9V247.4M616.5 227.7V245.4M617.0 230.3V246.2M617.5 228.6V246.9M618.0 231.3V245.9M618.5 230.1V248.3M619.0 228.4V251.9M619.5 225.2V249.3M620.0 229.6V245.9M620.5 226.4V246.7M621.0 230.5V247.1M621.5 224.3V245.6M622.0 227.4V245.5M622.5 230.0V245.3M623.0 229.1V247.5M623.5 224.6V245.4M624.0 230.5V248.6M624.5 224.4V250.0M625.0 229.3V247.6M625.5 227.0V247.4M626.0 230.3V245.8M626.5 230.3V245.0M627.0 231.1V246.5M627.5 231.1V251.2M628.0 230.8V247.0M628.5 227.9V245.8M629.0 230.6V248.9M629.5 229.2V246.2M630.0 226.0V250.0M630.5 227.7V246.1M631.0 229.4V252.2M631.5 228.1V246.4M632.0 224.7V252.3M632.5 230.5V244.9M633.0 224.2V245.8M633.5 229.0V246.9M634.0 226.6V250.4M634.5 229.1V249.5M635.0 228.2V247.6M635.5 231.2V245.6M636.0 229.2V245.8M636.5 229.1V245.6M637.0 230.4V247.0M637.5 231.3V245.4M638.0 230.8V244.8M638.5 230.6V250.8M639.0 226.2V246.1M639.5 228.0V247.3M640.0 226.0V252.2M640.5 227.0V245.8M641.0 230.6V244.9M641.5 229.7V247.3M642.0 224.9V244.8M642.5 226.8V248.7M643.0 227.1V249.9M643.5 225.2V246.5M644.0 225.6V245.5M644.5 230.2V245.7M645.0 229.9V248.3M645.5 225.1V246.0M646.0 227.7V245.4M646.5 227.5V245.8M647.0 229.6V246.4M647.5 230.0V245.3M648.0 230.4V250.6M648.5 230.7V251.9M649.0 230.8V246.6M649.5 231.0V248.6M650.0 231.2V246.4M650.5 228.6V246.4M651.0 229.0V250.8M651.5 228.9V247.0M652.0 228.1V246.6M652.5 230.1V245.4M653.0 229.4V245.3M653.5 229.3V248.0M654.0 229.9V252.8M654.5 227.4V252.1M655.0 230.7V252.9M655.5 226.9V247.7M656.0 227.4V247.4M656.5 225.7V248.4M657.0 230.1V247.5M657.5 229.9V248.0M658.0 226.7V246.4M658.5 226.3V248.9M659.0 226.7V245.8M659.5 231.2V245.5M660.0 230.6V245.0M660.5 228.0V250.6M661.0 231.0V247.6M661.5 230.5V248.9M662.0 230.4V246.1M662.5 228.3V249.0M663.0 227.4V247.1M663.5 224.9V248.1M664.0 224.7V248.7M664.5 229.9V246.1M665.0 229.7V250.1M665.5 229.2V251.5M666.0 230.3V247.0M666.5 230.6V250.6M667.0 225.5V246.0M667.5 229.6V245.5M668.0 229.5V251.7M668.5 228.0V246.0M669.0 225.6V245.8M669.5 226.7V250.4M670.0 230.3V251.3M670.5 230.3V249.1M671.0 225.1V251.7M671.5 229.5V246.2M672.0 228.7V247.1M672.5 224.8V246.0M673.0 227.3V252.7M673.5 229.6V247.6M674.0 230.2V246.2M674.5 227.0V245.1M675.0 228.2V248.7M675.5 227.1V249.5M676.0 231.3V250.1M676.5 230.8V245.9M677.0 230.5V249.6M677.5 230.3V247.9M678.0 229.6V246.0M678.5 229.5V245.3M679.0 229.4V247.0M679.5 226.8V245.3M680.0 230.3V247.2M680.5 229.5V244.8M681.0 227.1V248.7M681.5 230.6V244.7M682.0 227.8V250.5M682.5 230.3V245.1M683.0 230.4V246.3M683.5 225.0V246.9M684.0 230.2V246.0M684.5 230.1V246.5M685.0 229.2V246.1M685.5 230.8V247.2M686.0 230.4V245.5M686.5 229.8V245.5M687.0 231.4V246.8M687.5 228.6V252.0M688.0 230.2V245.6M688.5 230.3V246.5M689.0 230.5V245.5M689.5 227.3V246.5M690.0 229.9V247.8M690.5 226.2V245.5M691.0 226.4V247.7M691.5 230.9V247.4M692.0 228.9V244.9M692.5 229.1V245.3M693.0 228.5V252.9M693.5 227.3V246.6M694.0 229.2V246.6M694.5 227.0V244.8M695.0 227.7V247.7M695.5 230.4V251.5M696.0 230.6V245.9M696.5 230.7V251.3M697.0 230.0V245.6M697.5 229.3V248.2M698.0 230.4V249.0M698.5 230.2V246.1M699.0 228.6V246.9M699.5 226.4V246.0M700.0 224.8V246.2M700.5 230.6V249.2M701.0 230.6V249.9M701.5 229.8V247.2M702.0 225.5V246.9M702.5 227.1V244.8M703.0 230.9V248.5M703.5 230.8V245.0M704.0 227.1V245.6M704.5 230.7V247.5M705.0 227.7V247.0M705.5 228.5V245.7M706.0 230.6V250.8M706.5 230.5V245.5M707.0 229.9V245.6M707.5 230.2V245.7M708.0 226.4V244.9M708.5 228.9V247.1M709.0 228.5V251.7M709.5 230.6V251.3M710.0 230.4V246.2M710.5 225.2V247.1M711.0 230.1V251.4M711.5 228.7V245.7M712.0 229.5V245.5M712.5 226.2V245.7M713.0 231.4V247.2M713.5 226.2V250.1M714.0 229.2V245.6M714.5 229.6V245.5M715.0 229.5V245.2M715.5 224.2V247.5M716.0 230.7V248.1M716.5 225.4V251.0M717.0 230.9V246.5M717.5 229.1V248.3M718.0 228.7V252.5M718.5 225.5V252.6M719.0 226.5V248.4M719.5 226.7V250.4M720.0 227.3V252.4M720.5 229.6V245.6M721.0 230.5V247.7M721.5 227.7V246.1M722.0 230.4V245.3M722.5 226.7V245.7M723.0 230.2V246.5M723.5 230.4V245.7M724.0 227.9V248.3M724.5 230.5V249.7M725.0 229.7V252.7M725.5 225.4V253.0M726.0 226.7V249.2M726.5 230.1V245.4M727.0 228.9V250.0M727.5 230.5V245.6M728.0 231.2V250.3M728.5 229.8V251.3M729.0 224.6V245.2M729.5 226.4V249.0M730.0 229.8V244.7M730.5 230.6V245.9M731.0 229.9V245.3M731.5 229.4V247.3M732.0 224.7V245.7M732.5 230.8V249.3M733.0 230.8V246.1M733.5 226.9V252.1M734.0 225.9V246.1M734.5 224.9V245.3M735.0 230.4V245.1M735.5 230.3V244.8M736.0 229.3V248.5M736.5 230.2V246.0M737.0 228.5V245.9M737.5 230.7V245.9M738.0 229.8V247.3M738.5 226.0V245.1M739.0 225.9V244.8M739.5 230.6V245.7M740.0 229.3V245.6M740.5 230.6V248.4M741.0 229.4V251.6M741.5 230.5V246.7M742.0 227.9V246.6M742.5 230.1V248.3M743.0 230.1V245.6M743.5 226.2V249.3M744.0 229.4V245.8M744.5 229.2V246.3M745.0 229.0V246.3M745.5 227.0V249.3M746.0 228.2V249.4M746.5 227.2V245.6M747.0 229.9V251.4M747.5 230.3V249.2M748.0 224.7V247.9M748.5 231.2V252.6M749.0 230.9V248.0M749.5 228.8V245.8M750.0 226.4V249.0M750.5 229.1V251.8M751.0 229.4V246.4M751.5 227.1V245.2M752.0 227.7V247.2M752.5 230.9V247.6M753.0 230.7V251.8M753.5 225.5V247.5M754.0 230.2V245.7M754.5 230.8V250.6M755.0 227.0V245.5M755.5 230.0V246.4M756.0 230.7V246.9M756.5 229.5V246.3M757.0 224.8V245.1M757.5 227.4V246.7M758.0 225.7V245.0M758.5 229.5V245.9M759.0 230.4V247.0M759.5 227.9V245.6M760.0 227.7V247.0M760.5 230.0V252.5M761.0 231.0V245.7M761.5 230.8V246.1M762.0 230.1V248.0M762.5 230.3V249.3M763.0 229.0V245.3M763.5 230.1V244.8M764.0 229.2V246.9M764.5 230.4V245.3M765.0 229.2V245.8M765.5 230.7V249.7M766.0 230.0V246.6M766.5 228.3V245.9M767.0 230.1V246.7M767.5 230.6V250.8M768.0 230.2V248.6M768.5 227.8V251.7M769.0 229.4V247.8M769.5 228.9V252.1M770.0 231.1V246.6M770.5 228.5V244.9M771.0 230.1V251.2M771.5 226.5V250.2M772.0 228.0V249.2M772.5 230.6V248.6M773.0 224.8V245.5M773.5 227.3V251.8M774.0 228.8V246.6M774.5 225.5V247.9M775.0 230.0V245.4M775.5 229.3V252.0M776.0 229.6V249.5M776.5 228.3V248.7M777.0 230.5V246.6M777.5 229.6V248.4M778.0 225.7V252.0M778.5 231.1V244.9M779.0 230.7V247.3M779.5 226.3V250.3M780.0 228.3V246.2M780.5 229.5V245.4M781.0 229.5V248.1M781.5 230.1V247.3M782.0 230.1V246.0M782.5 225.1V248.6M783.0 228.2V245.0M783.5 230.2V245.8M784.0 230.3V248.2M784.5 228.6V248.0M785.0 230.3V252.0M785.5 230.2V245.0M786.0 230.9V245.4M786.5 230.0V246.5M787.0 229.8V246.2M787.5 230.2V245.1M788.0 230.9V245.3M788.5 229.8V245.5M789.0 228.7V248.2M789.5 229.9V246.2M790.0 229.5V246.6M790.5 230.3V245.8M791.0 226.6V248.2M791.5 226.3V250.0M792.0 227.3V246.5M792.5 226.4V252.2M793.0 231.3V245.5M793.5 229.7V245.7M794.0 225.0V245.8M794.5 230.9V246.6M795.0 228.9V251.4M795.5 228.4V247.5M796.0 225.3V248.4M796.5 229.2V245.7M797.0 231.0V245.8M797.5 230.6V248.8M798.0 229.2V245.5M798.5 227.0V249.4M799.0 230.4V250.1M799.5 230.8V244.8M800.0 230.7V246.0M800.5 228.9V248.3M801.0 229.4V246.4M801.5 227.7V244.8M802.0 231.0V245.4M802.5 230.5V245.6M803.0 226.9V248.4M803.5 228.7V246.1M804.0 230.6V246.7M804.5 231.4V245.4M805.0 230.3V244.8" stroke="#000" stroke-width="1" fill="none"/><line x1="363.5" y1="196" x2="363.5" y2="255" stroke="#000" stroke-width="1"/><line x1="364.5" y1="189" x2="364.5" y2="250" stroke="#000" stroke-width="1"/><line x1="365.5" y1="206" x2="365.5" y2="258" stroke="#000" stroke-width="1"/><line x1="368.5" y1="214" x2="368.5" y2="252" stroke="#000" stroke-width="1"/><line x1="377.5" y1="213" x2="377.5" y2="252" stroke="#000" stroke-width="1"/><line x1="399.5" y1="211" x2="399.5" y2="250" stroke="#000" stroke-width="1"/><line x1="412.5" y1="220" x2="412.5" y2="250" stroke="#000" stroke-width="1"/><line x1="416.5" y1="218" x2="416.5" y2="256" stroke="#000" stroke-width="1"/><line x1="425.5" y1="223" x2="425.5" y2="250" stroke="#000" stroke-width="1"/><line x1="431.5" y1="219" x2="431.5" y2="254" stroke="#000" stroke-width="1"/><line x1="464.5" y1="211" x2="464.5" y2="246" stroke="#000" stroke-width="1"/><line x1="483.5" y1="214" x2="483.5" y2="246" stroke="#000" stroke-width="1"/><line x1="499.5" y1="212" x2="499.5" y2="253" stroke="#000" stroke-width="1"/><line x1="508.5" y1="215" x2="508.5" y2="252" stroke="#000" stroke-width="1"/><line x1="524.5" y1="208" x2="524.5" y2="256" stroke="#000" stroke-width="1"/><line x1="613.5" y1="217" x2="613.5" y2="257" stroke="#000" stroke-width="1"/><line x1="614.5" y1="221" x2="614.5" y2="252" stroke="#000" stroke-width="1"/><line x1="622.5" y1="210" x2="622.5" y2="252" stroke="#000" stroke-width="1"/><line x1="654.5" y1="210" x2="654.5" y2="252" stroke="#000" stroke-width="1"/><line x1="664.5" y1="212" x2="664.5" y2="250" stroke="#000" stroke-width="1"/><line x1="740.5" y1="211" x2="740.5" y2="246" stroke="#000" stroke-width="1"/><line x1="768.5" y1="213" x2="768.5" y2="250" stroke="#000" stroke-width="1"/><line x1="789.5" y1="212" x2="789.5" y2="246" stroke="#000" stroke-width="1"/><line x1="780.5" y1="214" x2="780.5" y2="250" stroke="#000" stroke-width="1"/><rect x="368.30" y="201" width="1.4" height="71.5" fill="#40c0ff" fill-opacity="0.85"/><rect x="367.40" y="199" width="3.2" height="3.2" fill="#40c0ff"/><rect x="391.90" y="201" width="1.2" height="71.5" fill="#0000ff" fill-opacity="1"/><rect x="390.90" y="199" width="3.2" height="3.2" fill="#0000ff"/><rect x="410.55" y="201" width="1.4" height="71.5" fill="#40c0ff" fill-opacity="0.85"/><rect x="409.65" y="199" width="3.2" height="3.2" fill="#40c0ff"/><rect x="412.90" y="201" width="1.4" height="71.5" fill="#40c0ff" fill-opacity="0.85"/><rect x="412.00" y="199" width="3.2" height="3.2" fill="#40c0ff"/><rect x="415.90" y="201" width="1.2" height="71.5" fill="#800080" fill-opacity="1"/><rect x="414.90" y="199" width="3.2" height="3.2" fill="#800080"/><rect x="420.70" y="201" width="1.4" height="71.5" fill="#40c0ff" fill-opacity="0.85"/><rect x="419.80" y="199" width="3.2" height="3.2" fill="#40c0ff"/><rect x="422.70" y="201" width="1.4" height="71.5" fill="#40c0ff" fill-opacity="0.85"/><rect x="421.80" y="199" width="3.2" height="3.2" fill="#40c0ff"/><rect x="425.00" y="201" width="1.4" height="71.5" fill="#40c0ff" fill-opacity="0.85"/><rect x="424.10" y="199" width="3.2" height="3.2" fill="#40c0ff"/><rect x="432.40" y="201" width="1.4" height="71.5" fill="#40c0ff" fill-opacity="0.85"/><rect x="431.50" y="199" width="3.2" height="3.2" fill="#40c0ff"/><rect x="434.00" y="201" width="1.4" height="71.5" fill="#40c0ff" fill-opacity="0.85"/><rect x="433.10" y="199" width="3.2" height="3.2" fill="#40c0ff"/><rect x="435.30" y="201" width="1.2" height="71.5" fill="#800080" fill-opacity="1"/><rect x="434.30" y="199" width="3.2" height="3.2" fill="#800080"/><rect x="488.20" y="201" width="1.2" height="71.5" fill="#800080" fill-opacity="1"/><rect x="487.20" y="199" width="3.2" height="3.2" fill="#800080"/><rect x="498.30" y="201" width="1.4" height="71.5" fill="#40c0ff" fill-opacity="0.85"/><rect x="497.40" y="199" width="3.2" height="3.2" fill="#40c0ff"/><rect x="508.00" y="201" width="1.4" height="71.5" fill="#40c0ff" fill-opacity="0.85"/><rect x="507.10" y="199" width="3.2" height="3.2" fill="#40c0ff"/><rect x="522.70" y="201" width="1.4" height="71.5" fill="#40c0ff" fill-opacity="0.85"/><rect x="521.80" y="199" width="3.2" height="3.2" fill="#40c0ff"/><rect x="643.50" y="201" width="1.4" height="71.5" fill="#40c0ff" fill-opacity="0.85"/><rect x="642.60" y="199" width="3.2" height="3.2" fill="#40c0ff"/><rect x="646.40" y="201" width="1.2" height="71.5" fill="#800080" fill-opacity="1"/><rect x="645.40" y="199" width="3.2" height="3.2" fill="#800080"/><rect x="653.60" y="201" width="1.4" height="71.5" fill="#40c0ff" fill-opacity="0.85"/><rect x="652.70" y="199" width="3.2" height="3.2" fill="#40c0ff"/><rect x="661.80" y="201" width="1.4" height="71.5" fill="#40c0ff" fill-opacity="0.85"/><rect x="660.90" y="199" width="3.2" height="3.2" fill="#40c0ff"/><rect x="663.30" y="201" width="1.2" height="71.5" fill="#800080" fill-opacity="1"/><rect x="662.30" y="199" width="3.2" height="3.2" fill="#800080"/><rect x="690.60" y="201" width="1.4" height="71.5" fill="#40c0ff" fill-opacity="0.85"/><rect x="689.70" y="199" width="3.2" height="3.2" fill="#40c0ff"/><rect x="720.10" y="201" width="1.4" height="71.5" fill="#40c0ff" fill-opacity="0.85"/><rect x="719.20" y="199" width="3.2" height="3.2" fill="#40c0ff"/><rect x="752.20" y="201" width="1.2" height="71.5" fill="#800080" fill-opacity="1"/><rect x="751.20" y="199" width="3.2" height="3.2" fill="#800080"/><rect x="756.80" y="201" width="1.2" height="71.5" fill="#800080" fill-opacity="1"/><rect x="755.80" y="199" width="3.2" height="3.2" fill="#800080"/><rect x="774.50" y="201" width="1.4" height="71.5" fill="#40c0ff" fill-opacity="0.85"/><rect x="773.60" y="199" width="3.2" height="3.2" fill="#40c0ff"/><rect x="792.60" y="201" width="1.4" height="71.5" fill="#40c0ff" fill-opacity="0.85"/><rect x="791.70" y="199" width="3.2" height="3.2" fill="#40c0ff"/><rect x="361.5" y="181.5" width="444.0" height="112.0" fill="none" stroke="#333" stroke-width="1"/><text x="356" y="186.7" font-size="9" text-anchor="end" font-weight="normal" fill="#222">180.0</text><line x1="357" y1="181.50" x2="361.5" y2="181.50" stroke="#222" stroke-width="1"/><text x="356" y="209.1" font-size="9" text-anchor="end" font-weight="normal" fill="#222">108.0</text><line x1="357" y1="203.50" x2="361.5" y2="203.50" stroke="#222" stroke-width="1"/><text x="356" y="231.5" font-size="9" text-anchor="end" font-weight="normal" fill="#222">36.0</text><line x1="357" y1="226.50" x2="361.5" y2="226.50" stroke="#222" stroke-width="1"/><text x="356" y="253.89999999999998" font-size="9" text-anchor="end" font-weight="normal" fill="#222">-36.0</text><line x1="357" y1="248.50" x2="361.5" y2="248.50" stroke="#222" stroke-width="1"/><text x="356" y="276.3" font-size="9" text-anchor="end" font-weight="normal" fill="#222">-108.0</text><line x1="357" y1="271.50" x2="361.5" y2="271.50" stroke="#222" stroke-width="1"/><text x="356" y="298.7" font-size="9" text-anchor="end" font-weight="normal" fill="#222">-180.0</text><line x1="357" y1="293.50" x2="361.5" y2="293.50" stroke="#222" stroke-width="1"/><line x1="359" y1="181.50" x2="361.5" y2="181.50" stroke="#333" stroke-width="1"/><line x1="359" y1="187.50" x2="361.5" y2="187.50" stroke="#333" stroke-width="1"/><line x1="359" y1="192.50" x2="361.5" y2="192.50" stroke="#333" stroke-width="1"/><line x1="359" y1="198.50" x2="361.5" y2="198.50" stroke="#333" stroke-width="1"/><line x1="359" y1="203.50" x2="361.5" y2="203.50" stroke="#333" stroke-width="1"/><line x1="359" y1="209.50" x2="361.5" y2="209.50" stroke="#333" stroke-width="1"/><line x1="359" y1="215.50" x2="361.5" y2="215.50" stroke="#333" stroke-width="1"/><line x1="359" y1="220.50" x2="361.5" y2="220.50" stroke="#333" stroke-width="1"/><line x1="359" y1="226.50" x2="361.5" y2="226.50" stroke="#333" stroke-width="1"/><line x1="359" y1="231.50" x2="361.5" y2="231.50" stroke="#333" stroke-width="1"/><line x1="359" y1="237.50" x2="361.5" y2="237.50" stroke="#333" stroke-width="1"/><line x1="359" y1="243.50" x2="361.5" y2="243.50" stroke="#333" stroke-width="1"/><line x1="359" y1="248.50" x2="361.5" y2="248.50" stroke="#333" stroke-width="1"/><line x1="359" y1="254.50" x2="361.5" y2="254.50" stroke="#333" stroke-width="1"/><line x1="359" y1="259.50" x2="361.5" y2="259.50" stroke="#333" stroke-width="1"/><line x1="359" y1="265.50" x2="361.5" y2="265.50" stroke="#333" stroke-width="1"/><line x1="359" y1="271.50" x2="361.5" y2="271.50" stroke="#333" stroke-width="1"/><line x1="359" y1="276.50" x2="361.5" y2="276.50" stroke="#333" stroke-width="1"/><line x1="359" y1="282.50" x2="361.5" y2="282.50" stroke="#333" stroke-width="1"/><line x1="359" y1="287.50" x2="361.5" y2="287.50" stroke="#333" stroke-width="1"/><line x1="359" y1="293.50" x2="361.5" y2="293.50" stroke="#333" stroke-width="1"/><line x1="366.50" y1="293.5" x2="366.50" y2="296.5" stroke="#222" stroke-width="1"/><line x1="370.50" y1="293.5" x2="370.50" y2="296.5" stroke="#222" stroke-width="1"/><line x1="375.50" y1="293.5" x2="375.50" y2="296.5" stroke="#222" stroke-width="1"/><line x1="379.50" y1="293.5" x2="379.50" y2="299.5" stroke="#222" stroke-width="1"/><line x1="383.50" y1="293.5" x2="383.50" y2="296.5" stroke="#222" stroke-width="1"/><line x1="388.50" y1="293.5" x2="388.50" y2="296.5" stroke="#222" stroke-width="1"/><line x1="392.50" y1="293.5" x2="392.50" y2="296.5" stroke="#222" stroke-width="1"/><line x1="396.50" y1="293.5" x2="396.50" y2="296.5" stroke="#222" stroke-width="1"/><line x1="401.50" y1="293.5" x2="401.50" y2="296.5" stroke="#222" stroke-width="1"/><line x1="405.50" y1="293.5" x2="405.50" y2="296.5" stroke="#222" stroke-width="1"/><line x1="409.50" y1="293.5" x2="409.50" y2="296.5" stroke="#222" stroke-width="1"/><line x1="413.50" y1="293.5" x2="413.50" y2="296.5" stroke="#222" stroke-width="1"/><line x1="418.50" y1="293.5" x2="418.50" y2="296.5" stroke="#222" stroke-width="1"/><line x1="422.50" y1="293.5" x2="422.50" y2="299.5" stroke="#222" stroke-width="1"/><line x1="426.50" y1="293.5" x2="426.50" y2="296.5" stroke="#222" stroke-width="1"/><line x1="431.50" y1="293.5" x2="431.50" y2="296.5" stroke="#222" stroke-width="1"/><line x1="435.50" y1="293.5" x2="435.50" y2="296.5" stroke="#222" stroke-width="1"/><line x1="439.50" y1="293.5" x2="439.50" y2="296.5" stroke="#222" stroke-width="1"/><line x1="444.50" y1="293.5" x2="444.50" y2="296.5" stroke="#222" stroke-width="1"/><line x1="448.50" y1="293.5" x2="448.50" y2="296.5" stroke="#222" stroke-width="1"/><line x1="452.50" y1="293.5" x2="452.50" y2="296.5" stroke="#222" stroke-width="1"/><line x1="456.50" y1="293.5" x2="456.50" y2="296.5" stroke="#222" stroke-width="1"/><line x1="461.50" y1="293.5" x2="461.50" y2="296.5" stroke="#222" stroke-width="1"/><line x1="465.50" y1="293.5" x2="465.50" y2="299.5" stroke="#222" stroke-width="1"/><line x1="469.50" y1="293.5" x2="469.50" y2="296.5" stroke="#222" stroke-width="1"/><line x1="474.50" y1="293.5" x2="474.50" y2="296.5" stroke="#222" stroke-width="1"/><line x1="478.50" y1="293.5" x2="478.50" y2="296.5" stroke="#222" stroke-width="1"/><line x1="482.50" y1="293.5" x2="482.50" y2="296.5" stroke="#222" stroke-width="1"/><line x1="487.50" y1="293.5" x2="487.50" y2="296.5" stroke="#222" stroke-width="1"/><line x1="491.50" y1="293.5" x2="491.50" y2="296.5" stroke="#222" stroke-width="1"/><line x1="495.50" y1="293.5" x2="495.50" y2="296.5" stroke="#222" stroke-width="1"/><line x1="499.50" y1="293.5" x2="499.50" y2="296.5" stroke="#222" stroke-width="1"/><line x1="504.50" y1="293.5" x2="504.50" y2="296.5" stroke="#222" stroke-width="1"/><line x1="508.50" y1="293.5" x2="508.50" y2="299.5" stroke="#222" stroke-width="1"/><line x1="512.50" y1="293.5" x2="512.50" y2="296.5" stroke="#222" stroke-width="1"/><line x1="517.50" y1="293.5" x2="517.50" y2="296.5" stroke="#222" stroke-width="1"/><line x1="521.50" y1="293.5" x2="521.50" y2="296.5" stroke="#222" stroke-width="1"/><line x1="525.50" y1="293.5" x2="525.50" y2="296.5" stroke="#222" stroke-width="1"/><line x1="530.50" y1="293.5" x2="530.50" y2="296.5" stroke="#222" stroke-width="1"/><line x1="534.50" y1="293.5" x2="534.50" y2="296.5" stroke="#222" stroke-width="1"/><line x1="538.50" y1="293.5" x2="538.50" y2="296.5" stroke="#222" stroke-width="1"/><line x1="542.50" y1="293.5" x2="542.50" y2="296.5" stroke="#222" stroke-width="1"/><line x1="547.50" y1="293.5" x2="547.50" y2="296.5" stroke="#222" stroke-width="1"/><line x1="551.50" y1="293.5" x2="551.50" y2="299.5" stroke="#222" stroke-width="1"/><line x1="555.50" y1="293.5" x2="555.50" y2="296.5" stroke="#222" stroke-width="1"/><line x1="560.50" y1="293.5" x2="560.50" y2="296.5" stroke="#222" stroke-width="1"/><line x1="564.50" y1="293.5" x2="564.50" y2="296.5" stroke="#222" stroke-width="1"/><line x1="568.50" y1="293.5" x2="568.50" y2="296.5" stroke="#222" stroke-width="1"/><line x1="573.50" y1="293.5" x2="573.50" y2="296.5" stroke="#222" stroke-width="1"/><line x1="577.50" y1="293.5" x2="577.50" y2="296.5" stroke="#222" stroke-width="1"/><line x1="581.50" y1="293.5" x2="581.50" y2="296.5" stroke="#222" stroke-width="1"/><line x1="585.50" y1="293.5" x2="585.50" y2="296.5" stroke="#222" stroke-width="1"/><line x1="590.50" y1="293.5" x2="590.50" y2="296.5" stroke="#222" stroke-width="1"/><line x1="594.50" y1="293.5" x2="594.50" y2="299.5" stroke="#222" stroke-width="1"/><line x1="598.50" y1="293.5" x2="598.50" y2="296.5" stroke="#222" stroke-width="1"/><line x1="603.50" y1="293.5" x2="603.50" y2="296.5" stroke="#222" stroke-width="1"/><line x1="607.50" y1="293.5" x2="607.50" y2="296.5" stroke="#222" stroke-width="1"/><line x1="611.50" y1="293.5" x2="611.50" y2="296.5" stroke="#222" stroke-width="1"/><line x1="616.50" y1="293.5" x2="616.50" y2="296.5" stroke="#222" stroke-width="1"/><line x1="620.50" y1="293.5" x2="620.50" y2="296.5" stroke="#222" stroke-width="1"/><line x1="624.50" y1="293.5" x2="624.50" y2="296.5" stroke="#222" stroke-width="1"/><line x1="628.50" y1="293.5" x2="628.50" y2="296.5" stroke="#222" stroke-width="1"/><line x1="633.50" y1="293.5" x2="633.50" y2="296.5" stroke="#222" stroke-width="1"/><line x1="637.50" y1="293.5" x2="637.50" y2="299.5" stroke="#222" stroke-width="1"/><line x1="641.50" y1="293.5" x2="641.50" y2="296.5" stroke="#222" stroke-width="1"/><line x1="646.50" y1="293.5" x2="646.50" y2="296.5" stroke="#222" stroke-width="1"/><line x1="650.50" y1="293.5" x2="650.50" y2="296.5" stroke="#222" stroke-width="1"/><line x1="654.50" y1="293.5" x2="654.50" y2="296.5" stroke="#222" stroke-width="1"/><line x1="659.50" y1="293.5" x2="659.50" y2="296.5" stroke="#222" stroke-width="1"/><line x1="663.50" y1="293.5" x2="663.50" y2="296.5" stroke="#222" stroke-width="1"/><line x1="667.50" y1="293.5" x2="667.50" y2="296.5" stroke="#222" stroke-width="1"/><line x1="671.50" y1="293.5" x2="671.50" y2="296.5" stroke="#222" stroke-width="1"/><line x1="676.50" y1="293.5" x2="676.50" y2="296.5" stroke="#222" stroke-width="1"/><line x1="680.50" y1="293.5" x2="680.50" y2="299.5" stroke="#222" stroke-width="1"/><line x1="684.50" y1="293.5" x2="684.50" y2="296.5" stroke="#222" stroke-width="1"/><line x1="689.50" y1="293.5" x2="689.50" y2="296.5" stroke="#222" stroke-width="1"/><line x1="693.50" y1="293.5" x2="693.50" y2="296.5" stroke="#222" stroke-width="1"/><line x1="697.50" y1="293.5" x2="697.50" y2="296.5" stroke="#222" stroke-width="1"/><line x1="702.50" y1="293.5" x2="702.50" y2="296.5" stroke="#222" stroke-width="1"/><line x1="706.50" y1="293.5" x2="706.50" y2="296.5" stroke="#222" stroke-width="1"/><line x1="710.50" y1="293.5" x2="710.50" y2="296.5" stroke="#222" stroke-width="1"/><line x1="714.50" y1="293.5" x2="714.50" y2="296.5" stroke="#222" stroke-width="1"/><line x1="719.50" y1="293.5" x2="719.50" y2="296.5" stroke="#222" stroke-width="1"/><line x1="723.50" y1="293.5" x2="723.50" y2="299.5" stroke="#222" stroke-width="1"/><line x1="727.50" y1="293.5" x2="727.50" y2="296.5" stroke="#222" stroke-width="1"/><line x1="732.50" y1="293.5" x2="732.50" y2="296.5" stroke="#222" stroke-width="1"/><line x1="736.50" y1="293.5" x2="736.50" y2="296.5" stroke="#222" stroke-width="1"/><line x1="740.50" y1="293.5" x2="740.50" y2="296.5" stroke="#222" stroke-width="1"/><line x1="745.50" y1="293.5" x2="745.50" y2="296.5" stroke="#222" stroke-width="1"/><line x1="749.50" y1="293.5" x2="749.50" y2="296.5" stroke="#222" stroke-width="1"/><line x1="753.50" y1="293.5" x2="753.50" y2="296.5" stroke="#222" stroke-width="1"/><line x1="757.50" y1="293.5" x2="757.50" y2="296.5" stroke="#222" stroke-width="1"/><line x1="762.50" y1="293.5" x2="762.50" y2="296.5" stroke="#222" stroke-width="1"/><line x1="766.50" y1="293.5" x2="766.50" y2="299.5" stroke="#222" stroke-width="1"/><line x1="770.50" y1="293.5" x2="770.50" y2="296.5" stroke="#222" stroke-width="1"/><line x1="775.50" y1="293.5" x2="775.50" y2="296.5" stroke="#222" stroke-width="1"/><line x1="779.50" y1="293.5" x2="779.50" y2="296.5" stroke="#222" stroke-width="1"/><line x1="783.50" y1="293.5" x2="783.50" y2="296.5" stroke="#222" stroke-width="1"/><line x1="788.50" y1="293.5" x2="788.50" y2="296.5" stroke="#222" stroke-width="1"/><line x1="792.50" y1="293.5" x2="792.50" y2="296.5" stroke="#222" stroke-width="1"/><line x1="796.50" y1="293.5" x2="796.50" y2="296.5" stroke="#222" stroke-width="1"/><line x1="800.50" y1="293.5" x2="800.50" y2="296.5" stroke="#222" stroke-width="1"/><line x1="805.50" y1="293.5" x2="805.50" y2="296.5" stroke="#222" stroke-width="1"/><text x="379.5" y="309.5" font-size="9" text-anchor="middle" font-weight="normal" fill="#222">00:36</text><text x="422.5" y="309.5" font-size="9" text-anchor="middle" font-weight="normal" fill="#222">01:24</text><text x="465.5" y="309.5" font-size="9" text-anchor="middle" font-weight="normal" fill="#222">02:12</text><text x="508.5" y="309.5" font-size="9" text-anchor="middle" font-weight="normal" fill="#222">03:00</text><text x="551.5" y="309.5" font-size="9" text-anchor="middle" font-weight="normal" fill="#222">03:48</text><text x="594.5" y="309.5" font-size="9" text-anchor="middle" font-weight="normal" fill="#222">04:36</text><text x="637.5" y="309.5" font-size="9" text-anchor="middle" font-weight="normal" fill="#222">05:24</text><text x="680.5" y="309.5" font-size="9" text-anchor="middle" font-weight="normal" fill="#222">06:12</text><text x="723.5" y="309.5" font-size="9" text-anchor="middle" font-weight="normal" fill="#222">07:00</text><text x="766.5" y="309.5" font-size="9" text-anchor="middle" font-weight="normal" fill="#222">07:48</text><text transform="translate(305.3,240) rotate(-90) scale(1,1.12)" font-size="11.6" font-weight="bold" text-anchor="middle" fill="#222">Flow Rate</text><text x="362" y="177" font-size="8.8" text-anchor="start" font-weight="normal" fill="#111">Duration 06:37:17 AHI 5.29 Flow Rate: 45.82</text><line x1="754.5" y1="173.5" x2="765.5" y2="173.5" stroke="#000" stroke-width="1.8"/><text x="767.5" y="177" font-size="9.2" text-anchor="start" font-weight="normal" fill="#111" textLength="36.5" lengthAdjust="spacingAndGlyphs">Flow Rate</text><rect x="361.5" y="328.5" width="444.0" height="112.0" fill="#fff"/><line x1="361.5" y1="334.50" x2="805.5" y2="334.50" stroke="#f6f6f6" stroke-width="1"/><line x1="361.5" y1="339.50" x2="805.5" y2="339.50" stroke="#f6f6f6" stroke-width="1"/><line x1="361.5" y1="345.50" x2="805.5" y2="345.50" stroke="#f6f6f6" stroke-width="1"/><line x1="361.5" y1="350.50" x2="805.5" y2="350.50" stroke="#f6f6f6" stroke-width="1"/><line x1="361.5" y1="356.50" x2="805.5" y2="356.50" stroke="#f6f6f6" stroke-width="1"/><line x1="361.5" y1="362.50" x2="805.5" y2="362.50" stroke="#f6f6f6" stroke-width="1"/><line x1="361.5" y1="367.50" x2="805.5" y2="367.50" stroke="#f6f6f6" stroke-width="1"/><line x1="361.5" y1="373.50" x2="805.5" y2="373.50" stroke="#f6f6f6" stroke-width="1"/><line x1="361.5" y1="378.50" x2="805.5" y2="378.50" stroke="#f6f6f6" stroke-width="1"/><line x1="361.5" y1="384.50" x2="805.5" y2="384.50" stroke="#f6f6f6" stroke-width="1"/><line x1="361.5" y1="390.50" x2="805.5" y2="390.50" stroke="#f6f6f6" stroke-width="1"/><line x1="361.5" y1="395.50" x2="805.5" y2="395.50" stroke="#f6f6f6" stroke-width="1"/><line x1="361.5" y1="401.50" x2="805.5" y2="401.50" stroke="#f6f6f6" stroke-width="1"/><line x1="361.5" y1="406.50" x2="805.5" y2="406.50" stroke="#f6f6f6" stroke-width="1"/><line x1="361.5" y1="412.50" x2="805.5" y2="412.50" stroke="#f6f6f6" stroke-width="1"/><line x1="361.5" y1="418.50" x2="805.5" y2="418.50" stroke="#f6f6f6" stroke-width="1"/><line x1="361.5" y1="423.50" x2="805.5" y2="423.50" stroke="#f6f6f6" stroke-width="1"/><line x1="361.5" y1="429.50" x2="805.5" y2="429.50" stroke="#f6f6f6" stroke-width="1"/><line x1="361.5" y1="434.50" x2="805.5" y2="434.50" stroke="#f6f6f6" stroke-width="1"/><line x1="361.5" y1="350.90" x2="805.5" y2="350.90" stroke="#e6e6e6" stroke-width="1"/><line x1="361.5" y1="373.30" x2="805.5" y2="373.30" stroke="#e6e6e6" stroke-width="1"/><line x1="361.5" y1="395.70" x2="805.5" y2="395.70" stroke="#e6e6e6" stroke-width="1"/><line x1="361.5" y1="418.10" x2="805.5" y2="418.10" stroke="#e6e6e6" stroke-width="1"/><path d="M361.0 431.8H361.5V431.8H362.0V431.8H362.5V436.5H363.0V436.5H363.5V436.5H364.0V415.4H364.5V415.4H365.0V415.4H365.5V417.4H366.0V417.4H366.5V424.7H367.0V424.7H367.5V424.7H368.0V427.2H368.5V427.2H369.0V427.2H369.5V413.4H370.0V425.7H370.5V425.7H371.0V420.7H371.5V420.7H372.0V420.4H372.5V420.4H373.0V420.4H373.5V421.2H374.0V421.2H374.5V420.2H375.0V420.9H375.5V421.2H376.0V420.4H376.5V421.1H377.0V421.1H377.5V421.1H378.0V420.8H378.5V420.3H379.0V420.0H379.5V420.0H380.0V420.0H380.5V419.8H381.0V420.5H381.5V421.0H382.0V420.7H382.5V420.7H383.0V421.1H383.5V421.1H384.0V421.1H384.5V420.6H385.0V421.2H385.5V421.2H386.0V421.2H386.5V420.1H387.0V420.1H387.5V421.2H388.0V421.2H388.5V421.2H389.0V420.2H389.5V420.8H390.0V420.8H390.5V420.9H391.0V420.9H391.5V420.9H392.0V421.4H392.5V421.4H393.0V419.9H393.5V419.9H394.0V420.0H394.5V420.0H395.0V420.0H395.5V420.0H396.0V420.0H396.5V420.5H397.0V420.5H397.5V420.5H398.0V421.2H398.5V421.2H399.0V420.1H399.5V420.1H400.0V419.9H400.5V419.9H401.0V421.0H401.5V421.0H402.0V421.0H402.5V420.3H403.0V420.3H403.5V420.3H404.0V421.1H404.5V421.1H405.0V420.0H405.5V420.0H406.0V420.2H406.5V420.5H407.0V420.2H407.5V420.2H408.0V420.2H408.5V420.9H409.0V420.9H409.5V420.9H410.0V420.3H410.5V420.3H411.0V420.3H411.5V413.9H412.0V413.9H412.5V413.9H413.0V414.0H413.5V414.0H414.0V412.5H414.5V412.5H415.0V417.3H415.5V417.3H416.0V417.3H416.5V424.5H417.0V424.5H417.5V419.5H418.0V424.7H418.5V424.7H419.0V424.7H419.5V425.6H420.0V425.6H420.5V425.6H421.0V410.0H421.5V413.1H422.0V413.1H422.5V413.1H423.0V410.7H423.5V410.7H424.0V408.9H424.5V411.0H425.0V411.0H425.5V406.6H426.0V406.6H426.5V406.6H427.0V409.6H427.5V409.6H428.0V408.5H428.5V408.5H429.0V408.5H429.5V401.3H430.0V401.3H430.5V401.3H431.0V406.9H431.5V392.9H432.0V392.9H432.5V392.9H433.0V390.3H433.5V390.3H434.0V391.1H434.5V391.1H435.0V391.1H435.5V393.9H436.0V421.1H436.5V418.6H437.0V419.1H437.5V419.1H438.0V417.7H438.5V417.7H439.0V422.2H439.5V422.2H440.0V422.2H440.5V421.3H441.0V421.3H441.5V419.1H442.0V419.1H442.5V419.2H443.0V419.2H443.5V419.2H444.0V419.6H444.5V419.6H445.0V419.6H445.5V418.7H446.0V419.6H446.5V419.6H447.0V419.6H447.5V419.6H448.0V419.3H448.5V419.2H449.0V419.1H449.5V419.1H450.0V419.1H450.5V419.4H451.0V419.4H451.5V419.4H452.0V419.7H452.5V418.7H453.0V419.3H453.5V419.3H454.0V419.0H454.5V419.0H455.0V419.0H455.5V419.3H456.0V419.3H456.5V418.7H457.0V419.1H457.5V419.2H458.0V419.7H458.5V418.8H459.0V419.2H459.5V419.7H460.0V419.7H460.5V419.7H461.0V418.9H461.5V418.9H462.0V418.8H462.5V418.8H463.0V419.0H463.5V419.0H464.0V419.0H464.5V415.0H465.0V415.0H465.5V414.2H466.0V414.2H466.5V414.2H467.0V415.5H467.5V413.8H468.0V413.8H468.5V415.3H469.0V415.3H469.5V413.9H470.0V413.9H470.5V379.0H471.0V379.0H471.5V373.6H472.0V373.6H472.5V370.6H473.0V370.6H473.5V370.6H474.0V409.2H474.5V409.2H475.0V410.9H475.5V409.4H476.0V409.4H476.5V408.3H477.0V408.3H477.5V408.3H478.0V379.8H478.5V379.8H479.0V377.0H479.5V377.0H480.0V398.8H480.5V398.8H481.0V400.0H481.5V400.0H482.0V400.0H482.5V405.8H483.0V405.8H483.5V406.8H484.0V406.8H484.5V382.2H485.0V380.9H485.5V380.9H486.0V373.2H486.5V373.2H487.0V373.2H487.5V371.3H488.0V371.3H488.5V374.9H489.0V374.9H489.5V398.6H490.0V390.9H490.5V390.9H491.0V391.2H491.5V391.2H492.0V391.8H492.5V391.0H493.0V390.6H493.5V390.6H494.0V392.3H494.5V392.3H495.0V392.3H495.5V392.3H496.0V391.0H496.5V391.0H497.0V391.0H497.5V391.1H498.0V391.9H498.5V387.1H499.0V387.7H499.5V413.2H500.0V413.0H500.5V413.9H501.0V411.4H501.5V411.4H502.0V412.9H502.5V411.9H503.0V411.9H503.5V411.9H504.0V413.7H504.5V413.7H505.0V413.3H505.5V413.3H506.0V413.6H506.5V413.6H507.0V413.6H507.5V411.5H508.0V411.5H508.5V411.6H509.0V411.6H509.5V412.4H510.0V412.4H510.5V412.1H511.0V412.1H511.5V409.6H512.0V409.2H512.5V409.7H513.0V409.7H513.5V409.7H514.0V407.4H514.5V407.4H515.0V407.4H515.5V405.2H516.0V405.8H516.5V405.8H517.0V405.8H517.5V403.8H518.0V402.8H518.5V402.8H519.0V401.4H519.5V401.4H520.0V400.4H520.5V400.4H521.0V400.4H521.5V398.3H522.0V384.7H522.5V381.6H523.0V380.8H523.5V380.8H524.0V410.6H524.5V410.6H525.0V410.6H525.5V410.7H526.0M613.0 424.8H613.5V425.8H614.0V425.8H614.5V425.8H615.0V422.0H615.5V426.1H616.0V426.1H616.5V426.1H617.0V421.3H617.5V421.3H618.0V421.3H618.5V417.5H619.0V417.5H619.5V417.5H620.0V419.4H620.5V419.4H621.0V421.4H621.5V421.4H622.0V421.4H622.5V418.5H623.0V418.5H623.5V419.5H624.0V420.2H624.5V420.2H625.0V421.1H625.5V421.1H626.0V421.1H626.5V419.2H627.0V419.2H627.5V419.2H628.0V420.0H628.5V420.0H629.0V421.5H629.5V421.5H630.0V421.5H630.5V423.2H631.0V423.2H631.5V421.8H632.0V418.5H632.5V418.8H633.0V418.8H633.5V420.4H634.0V420.4H634.5V420.4H635.0V422.8H635.5V418.5H636.0V418.5H636.5V418.5H637.0V418.9H637.5V420.7H638.0V420.7H638.5V422.3H639.0V421.6H639.5V421.6H640.0V418.7H640.5V418.7H641.0V418.7H641.5V418.7H642.0V421.9H642.5V421.9H643.0V423.3H643.5V423.3H644.0V423.3H644.5V420.5H645.0V420.5H645.5V420.9H646.0V422.8H646.5V423.0H647.0V423.0H647.5V423.0H648.0V420.4H648.5V422.2H649.0V422.2H649.5V420.4H650.0V420.4H650.5V421.8H651.0V421.8H651.5V421.8H652.0V391.4H652.5V391.4H653.0V401.0H653.5V399.7H654.0V399.7H654.5V399.7H655.0V409.9H655.5V413.5H656.0V413.5H656.5V413.5H657.0V417.3H657.5V417.3H658.0V417.3H658.5V408.2H659.0V408.2H659.5V408.2H660.0V416.9H660.5V416.9H661.0V408.5H661.5V408.5H662.0V402.5H662.5V402.5H663.0V402.5H663.5V413.2H664.0V413.2H664.5V402.8H665.0V402.8H665.5V407.5H666.0V407.5H666.5V415.4H667.0V415.4H667.5V406.9H668.0V409.2H668.5V409.2H669.0V404.6H669.5V404.6H670.0V404.6H670.5V405.8H671.0V405.8H671.5V405.8H672.0V407.3H672.5V407.3H673.0V415.3H673.5V404.9H674.0V401.5H674.5V401.5H675.0V414.7H675.5V409.1H676.0V409.1H676.5V409.1H677.0V407.2H677.5V407.2H678.0V407.2H678.5V403.8H679.0V403.8H679.5V414.3H680.0V414.3H680.5V403.2H681.0V408.0H681.5V408.0H682.0V414.1H682.5V414.4H683.0V414.4H683.5V405.2H684.0V405.2H684.5V405.2H685.0V405.9H685.5V405.9H686.0V405.9H686.5V412.2H687.0V412.2H687.5V406.7H688.0V408.1H688.5V410.7H689.0V410.7H689.5V410.7H690.0V407.3H690.5V407.3H691.0V407.3H691.5V412.2H692.0V405.4H692.5V405.4H693.0V405.4H693.5V405.0H694.0V399.0H694.5V400.9H695.0V400.9H695.5V404.1H696.0V404.1H696.5V400.8H697.0V400.8H697.5V410.9H698.0V410.9H698.5V398.8H699.0V403.3H699.5V403.3H700.0V412.4H700.5V403.2H701.0V403.2H701.5V403.2H702.0V403.9H702.5V403.9H703.0V413.1H703.5V413.1H704.0V406.2H704.5V406.2H705.0V406.2H705.5V407.4H706.0V407.4H706.5V408.6H707.0V408.6H707.5V413.5H708.0V413.5H708.5V404.0H709.0V404.0H709.5V404.0H710.0V405.2H710.5V405.2H711.0V405.2H711.5V402.8H712.0V402.8H712.5V402.8H713.0V404.9H713.5V412.9H714.0V412.9H714.5V406.4H715.0V406.5H715.5V406.5H716.0V405.0H716.5V402.9H717.0V412.1H717.5V408.6H718.0V408.6H718.5V401.6H719.0V407.3H719.5V407.3H720.0V407.3H720.5V422.2H721.0V422.5H721.5V422.5H722.0V422.7H722.5V422.5H723.0V422.4H723.5V422.4H724.0V422.3H724.5V421.7H725.0V421.7H725.5V422.7H726.0V422.7H726.5V422.2H727.0V422.2H727.5V422.6H728.0V422.6H728.5V421.4H729.0V421.4H729.5V421.4H730.0V421.4H730.5V422.2H731.0V422.2H731.5V422.2H732.0V421.4H732.5V421.5H733.0V421.5H733.5V422.4H734.0V422.6H734.5V422.6H735.0V421.5H735.5V421.5H736.0V421.5H736.5V421.5H737.0V422.3H737.5V421.5H738.0V421.5H738.5V421.5H739.0V422.7H739.5V422.7H740.0V422.3H740.5V422.3H741.0V421.6H741.5V421.6H742.0V421.4H742.5V421.4H743.0V421.4H743.5V421.5H744.0V421.5H744.5V422.6H745.0V422.2H745.5V422.2H746.0V422.2H746.5V422.2H747.0V422.0H747.5V422.3H748.0V422.3H748.5V422.0H749.0V422.0H749.5V421.4H750.0V421.4H750.5V421.4H751.0V422.3H751.5V422.1H752.0V424.1H752.5V424.1H753.0V418.9H753.5V424.7H754.0V427.6H754.5V427.6H755.0V425.8H755.5V427.2H756.0V427.2H756.5V420.8H757.0V420.8H757.5V420.8H758.0V417.4H758.5V417.4H759.0V427.1H759.5V427.1H760.0V427.1H760.5V421.1H761.0V422.2H761.5V422.2H762.0V418.0H762.5V418.0H763.0V418.0H763.5V419.3H764.0V422.8H764.5V422.8H765.0V376.1H765.5V376.1H766.0V376.1H766.5V381.2H767.0V381.2H767.5V381.2H768.0V395.9H768.5V395.9H769.0V420.7H769.5V420.7H770.0V420.7H770.5V417.0H771.0V417.0H771.5V417.0H772.0V420.2H772.5V417.5H773.0V417.5H773.5V417.5H774.0V388.9H774.5V388.9H775.0V388.9H775.5V388.5H776.0V425.2H776.5V426.1H777.0V426.1H777.5V426.1H778.0V426.6H778.5V426.6H779.0V426.6H779.5V425.7H780.0V425.7H780.5V426.1H781.0V426.1H781.5V426.1H782.0V424.8H782.5V424.8H783.0V426.5H783.5V421.5H784.0V421.5H784.5V411.7H785.0V411.7H785.5V410.5H786.0V410.5H786.5V414.0H787.0V414.0H787.5V414.0H788.0V411.0H788.5V411.0H789.0V411.0H789.5V410.9H790.0V410.9H790.5V410.9H791.0V425.8H791.5V425.8H792.0V420.9H792.5V420.9H793.0V424.7H793.5V424.7H794.0V424.7H794.5V415.9H795.0V415.9H795.5V425.3H796.0V425.3H796.5V425.2H797.0V425.2H797.5V425.2H798.0V418.5H798.5V424.5H799.0V424.5H799.5V421.7H800.0V421.7H800.5V420.3H801.0V419.4H801.5V415.3H802.0V415.3H802.5V415.3H803.0V424.0H803.5V424.3H804.0V424.3H804.5V424.3H805.0" stroke="#006400" stroke-width="1" fill="none" shape-rendering="crispEdges"/><line x1="362.5" y1="401.9" x2="362.5" y2="422.9" stroke="#006400" stroke-width="1"/><line x1="363.5" y1="440.5" x2="363.5" y2="422.9" stroke="#006400" stroke-width="1"/><line x1="366.5" y1="402.1" x2="366.5" y2="419.5" stroke="#006400" stroke-width="1"/><line x1="369.5" y1="405.5" x2="369.5" y2="419.5" stroke="#006400" stroke-width="1"/><line x1="368.5" y1="429.3" x2="368.5" y2="419.5" stroke="#006400" stroke-width="1"/><line x1="377.5" y1="416.1" x2="377.5" y2="420.6" stroke="#006400" stroke-width="1"/><line x1="389.5" y1="416.1" x2="389.5" y2="420.6" stroke="#006400" stroke-width="1"/><line x1="392.5" y1="416.1" x2="392.5" y2="420.6" stroke="#006400" stroke-width="1"/><line x1="401.5" y1="416.1" x2="401.5" y2="420.6" stroke="#006400" stroke-width="1"/><line x1="413.5" y1="409.7" x2="413.5" y2="419.5" stroke="#006400" stroke-width="1"/><line x1="416.5" y1="432.7" x2="416.5" y2="419.5" stroke="#006400" stroke-width="1"/><line x1="418.5" y1="412.5" x2="418.5" y2="419.5" stroke="#006400" stroke-width="1"/><line x1="421.5" y1="409.7" x2="421.5" y2="411.1" stroke="#006400" stroke-width="1"/><line x1="419.5" y1="432.1" x2="419.5" y2="419.5" stroke="#006400" stroke-width="1"/><line x1="423.5" y1="398.8" x2="423.5" y2="409.1" stroke="#006400" stroke-width="1"/><line x1="432.5" y1="376.1" x2="432.5" y2="388.7" stroke="#006400" stroke-width="1"/><line x1="433.5" y1="356.2" x2="433.5" y2="387.3" stroke="#006400" stroke-width="1"/><line x1="432.5" y1="440.5" x2="432.5" y2="378.6" stroke="#006400" stroke-width="1"/><line x1="435.5" y1="434.9" x2="435.5" y2="395.7" stroke="#006400" stroke-width="1"/><line x1="438.5" y1="429.3" x2="438.5" y2="420.6" stroke="#006400" stroke-width="1"/><line x1="447.5" y1="416.1" x2="447.5" y2="419.2" stroke="#006400" stroke-width="1"/><line x1="450.5" y1="416.1" x2="450.5" y2="419.2" stroke="#006400" stroke-width="1"/><line x1="454.5" y1="416.1" x2="454.5" y2="419.2" stroke="#006400" stroke-width="1"/><line x1="458.5" y1="416.1" x2="458.5" y2="419.2" stroke="#006400" stroke-width="1"/><line x1="464.5" y1="432.7" x2="464.5" y2="414.5" stroke="#006400" stroke-width="1"/><line x1="487.5" y1="362.7" x2="487.5" y2="373.3" stroke="#006400" stroke-width="1"/><line x1="499.5" y1="422.0" x2="499.5" y2="412.8" stroke="#006400" stroke-width="1"/><line x1="506.5" y1="405.5" x2="506.5" y2="412.8" stroke="#006400" stroke-width="1"/><line x1="509.5" y1="398.8" x2="509.5" y2="412.8" stroke="#006400" stroke-width="1"/><line x1="509.5" y1="422.0" x2="509.5" y2="412.8" stroke="#006400" stroke-width="1"/><line x1="523.5" y1="376.1" x2="523.5" y2="378.9" stroke="#006400" stroke-width="1"/><line x1="524.5" y1="440.5" x2="524.5" y2="410.5" stroke="#006400" stroke-width="1"/><line x1="612.5" y1="402.7" x2="612.5" y2="420.9" stroke="#006400" stroke-width="1"/><line x1="613.5" y1="440.5" x2="613.5" y2="423.7" stroke="#006400" stroke-width="1"/><line x1="622.5" y1="369.9" x2="622.5" y2="420.9" stroke="#006400" stroke-width="1"/><line x1="640.5" y1="406.9" x2="640.5" y2="420.9" stroke="#006400" stroke-width="1"/><line x1="652.5" y1="339.7" x2="652.5" y2="388.7" stroke="#006400" stroke-width="1"/><line x1="652.5" y1="356.5" x2="652.5" y2="391.6" stroke="#006400" stroke-width="1"/><line x1="653.5" y1="432.1" x2="653.5" y2="393.7" stroke="#006400" stroke-width="1"/><line x1="660.5" y1="395.7" x2="660.5" y2="410.5" stroke="#006400" stroke-width="1"/><line x1="672.5" y1="392.9" x2="672.5" y2="409.0" stroke="#006400" stroke-width="1"/><line x1="681.5" y1="395.7" x2="681.5" y2="407.9" stroke="#006400" stroke-width="1"/><line x1="690.5" y1="398.5" x2="690.5" y2="406.7" stroke="#006400" stroke-width="1"/><line x1="703.5" y1="384.5" x2="703.5" y2="408.1" stroke="#006400" stroke-width="1"/><line x1="703.5" y1="440.5" x2="703.5" y2="408.0" stroke="#006400" stroke-width="1"/><line x1="719.5" y1="392.9" x2="719.5" y2="408.3" stroke="#006400" stroke-width="1"/><line x1="742.5" y1="426.5" x2="742.5" y2="422.0" stroke="#006400" stroke-width="1"/><line x1="747.5" y1="418.1" x2="747.5" y2="422.0" stroke="#006400" stroke-width="1"/><line x1="753.5" y1="398.8" x2="753.5" y2="422.1" stroke="#006400" stroke-width="1"/><line x1="753.5" y1="440.5" x2="753.5" y2="422.1" stroke="#006400" stroke-width="1"/><line x1="760.5" y1="405.5" x2="760.5" y2="421.4" stroke="#006400" stroke-width="1"/><line x1="761.5" y1="440.5" x2="761.5" y2="421.3" stroke="#006400" stroke-width="1"/><line x1="765.5" y1="372.5" x2="765.5" y2="379.5" stroke="#006400" stroke-width="1"/><line x1="773.5" y1="383.1" x2="773.5" y2="388.0" stroke="#006400" stroke-width="1"/><line x1="784.5" y1="398.8" x2="784.5" y2="417.0" stroke="#006400" stroke-width="1"/><line x1="784.5" y1="440.5" x2="784.5" y2="417.0" stroke="#006400" stroke-width="1"/><line x1="788.5" y1="402.1" x2="788.5" y2="417.0" stroke="#006400" stroke-width="1"/><rect x="365" y="418.9" width="56" height="3.4" fill="#006400"/><rect x="437" y="419.3" width="5" height="3.4" fill="#006400"/><rect x="621" y="418.1" width="30" height="2.8" fill="#006400" fill-opacity="0.8"/><rect x="790" y="419.0" width="15" height="3.2" fill="#006400" fill-opacity="0.85"/><rect x="361.5" y="328.5" width="444.0" height="112.0" fill="none" stroke="#333" stroke-width="1"/><text x="356" y="333.7" font-size="9" text-anchor="end" font-weight="normal" fill="#222">40.0</text><line x1="357" y1="328.50" x2="361.5" y2="328.50" stroke="#222" stroke-width="1"/><text x="356" y="356.09999999999997" font-size="9" text-anchor="end" font-weight="normal" fill="#222">32.0</text><line x1="357" y1="350.50" x2="361.5" y2="350.50" stroke="#222" stroke-width="1"/><text x="356" y="378.5" font-size="9" text-anchor="end" font-weight="normal" fill="#222">24.0</text><line x1="357" y1="373.50" x2="361.5" y2="373.50" stroke="#222" stroke-width="1"/><text x="356" y="400.9" font-size="9" text-anchor="end" font-weight="normal" fill="#222">16.0</text><line x1="357" y1="395.50" x2="361.5" y2="395.50" stroke="#222" stroke-width="1"/><text x="356" y="423.3" font-size="9" text-anchor="end" font-weight="normal" fill="#222">8.0</text><line x1="357" y1="418.50" x2="361.5" y2="418.50" stroke="#222" stroke-width="1"/><text x="356" y="445.7" font-size="9" text-anchor="end" font-weight="normal" fill="#222">0.0</text><line x1="357" y1="440.50" x2="361.5" y2="440.50" stroke="#222" stroke-width="1"/><line x1="359" y1="328.50" x2="361.5" y2="328.50" stroke="#333" stroke-width="1"/><line x1="359" y1="334.50" x2="361.5" y2="334.50" stroke="#333" stroke-width="1"/><line x1="359" y1="339.50" x2="361.5" y2="339.50" stroke="#333" stroke-width="1"/><line x1="359" y1="345.50" x2="361.5" y2="345.50" stroke="#333" stroke-width="1"/><line x1="359" y1="350.50" x2="361.5" y2="350.50" stroke="#333" stroke-width="1"/><line x1="359" y1="356.50" x2="361.5" y2="356.50" stroke="#333" stroke-width="1"/><line x1="359" y1="362.50" x2="361.5" y2="362.50" stroke="#333" stroke-width="1"/><line x1="359" y1="367.50" x2="361.5" y2="367.50" stroke="#333" stroke-width="1"/><line x1="359" y1="373.50" x2="361.5" y2="373.50" stroke="#333" stroke-width="1"/><line x1="359" y1="378.50" x2="361.5" y2="378.50" stroke="#333" stroke-width="1"/><line x1="359" y1="384.50" x2="361.5" y2="384.50" stroke="#333" stroke-width="1"/><line x1="359" y1="390.50" x2="361.5" y2="390.50" stroke="#333" stroke-width="1"/><line x1="359" y1="395.50" x2="361.5" y2="395.50" stroke="#333" stroke-width="1"/><line x1="359" y1="401.50" x2="361.5" y2="401.50" stroke="#333" stroke-width="1"/><line x1="359" y1="406.50" x2="361.5" y2="406.50" stroke="#333" stroke-width="1"/><line x1="359" y1="412.50" x2="361.5" y2="412.50" stroke="#333" stroke-width="1"/><line x1="359" y1="418.50" x2="361.5" y2="418.50" stroke="#333" stroke-width="1"/><line x1="359" y1="423.50" x2="361.5" y2="423.50" stroke="#333" stroke-width="1"/><line x1="359" y1="429.50" x2="361.5" y2="429.50" stroke="#333" stroke-width="1"/><line x1="359" y1="434.50" x2="361.5" y2="434.50" stroke="#333" stroke-width="1"/><line x1="359" y1="440.50" x2="361.5" y2="440.50" stroke="#333" stroke-width="1"/><line x1="366.50" y1="440.5" x2="366.50" y2="443.5" stroke="#222" stroke-width="1"/><line x1="370.50" y1="440.5" x2="370.50" y2="443.5" stroke="#222" stroke-width="1"/><line x1="375.50" y1="440.5" x2="375.50" y2="443.5" stroke="#222" stroke-width="1"/><line x1="379.50" y1="440.5" x2="379.50" y2="446.5" stroke="#222" stroke-width="1"/><line x1="383.50" y1="440.5" x2="383.50" y2="443.5" stroke="#222" stroke-width="1"/><line x1="388.50" y1="440.5" x2="388.50" y2="443.5" stroke="#222" stroke-width="1"/><line x1="392.50" y1="440.5" x2="392.50" y2="443.5" stroke="#222" stroke-width="1"/><line x1="396.50" y1="440.5" x2="396.50" y2="443.5" stroke="#222" stroke-width="1"/><line x1="401.50" y1="440.5" x2="401.50" y2="443.5" stroke="#222" stroke-width="1"/><line x1="405.50" y1="440.5" x2="405.50" y2="443.5" stroke="#222" stroke-width="1"/><line x1="409.50" y1="440.5" x2="409.50" y2="443.5" stroke="#222" stroke-width="1"/><line x1="413.50" y1="440.5" x2="413.50" y2="443.5" stroke="#222" stroke-width="1"/><line x1="418.50" y1="440.5" x2="418.50" y2="443.5" stroke="#222" stroke-width="1"/><line x1="422.50" y1="440.5" x2="422.50" y2="446.5" stroke="#222" stroke-width="1"/><line x1="426.50" y1="440.5" x2="426.50" y2="443.5" stroke="#222" stroke-width="1"/><line x1="431.50" y1="440.5" x2="431.50" y2="443.5" stroke="#222" stroke-width="1"/><line x1="435.50" y1="440.5" x2="435.50" y2="443.5" stroke="#222" stroke-width="1"/><line x1="439.50" y1="440.5" x2="439.50" y2="443.5" stroke="#222" stroke-width="1"/><line x1="444.50" y1="440.5" x2="444.50" y2="443.5" stroke="#222" stroke-width="1"/><line x1="448.50" y1="440.5" x2="448.50" y2="443.5" stroke="#222" stroke-width="1"/><line x1="452.50" y1="440.5" x2="452.50" y2="443.5" stroke="#222" stroke-width="1"/><line x1="456.50" y1="440.5" x2="456.50" y2="443.5" stroke="#222" stroke-width="1"/><line x1="461.50" y1="440.5" x2="461.50" y2="443.5" stroke="#222" stroke-width="1"/><line x1="465.50" y1="440.5" x2="465.50" y2="446.5" stroke="#222" stroke-width="1"/><line x1="469.50" y1="440.5" x2="469.50" y2="443.5" stroke="#222" stroke-width="1"/><line x1="474.50" y1="440.5" x2="474.50" y2="443.5" stroke="#222" stroke-width="1"/><line x1="478.50" y1="440.5" x2="478.50" y2="443.5" stroke="#222" stroke-width="1"/><line x1="482.50" y1="440.5" x2="482.50" y2="443.5" stroke="#222" stroke-width="1"/><line x1="487.50" y1="440.5" x2="487.50" y2="443.5" stroke="#222" stroke-width="1"/><line x1="491.50" y1="440.5" x2="491.50" y2="443.5" stroke="#222" stroke-width="1"/><line x1="495.50" y1="440.5" x2="495.50" y2="443.5" stroke="#222" stroke-width="1"/><line x1="499.50" y1="440.5" x2="499.50" y2="443.5" stroke="#222" stroke-width="1"/><line x1="504.50" y1="440.5" x2="504.50" y2="443.5" stroke="#222" stroke-width="1"/><line x1="508.50" y1="440.5" x2="508.50" y2="446.5" stroke="#222" stroke-width="1"/><line x1="512.50" y1="440.5" x2="512.50" y2="443.5" stroke="#222" stroke-width="1"/><line x1="517.50" y1="440.5" x2="517.50" y2="443.5" stroke="#222" stroke-width="1"/><line x1="521.50" y1="440.5" x2="521.50" y2="443.5" stroke="#222" stroke-width="1"/><line x1="525.50" y1="440.5" x2="525.50" y2="443.5" stroke="#222" stroke-width="1"/><line x1="530.50" y1="440.5" x2="530.50" y2="443.5" stroke="#222" stroke-width="1"/><line x1="534.50" y1="440.5" x2="534.50" y2="443.5" stroke="#222" stroke-width="1"/><line x1="538.50" y1="440.5" x2="538.50" y2="443.5" stroke="#222" stroke-width="1"/><line x1="542.50" y1="440.5" x2="542.50" y2="443.5" stroke="#222" stroke-width="1"/><line x1="547.50" y1="440.5" x2="547.50" y2="443.5" stroke="#222" stroke-width="1"/><line x1="551.50" y1="440.5" x2="551.50" y2="446.5" stroke="#222" stroke-width="1"/><line x1="555.50" y1="440.5" x2="555.50" y2="443.5" stroke="#222" stroke-width="1"/><line x1="560.50" y1="440.5" x2="560.50" y2="443.5" stroke="#222" stroke-width="1"/><line x1="564.50" y1="440.5" x2="564.50" y2="443.5" stroke="#222" stroke-width="1"/><line x1="568.50" y1="440.5" x2="568.50" y2="443.5" stroke="#222" stroke-width="1"/><line x1="573.50" y1="440.5" x2="573.50" y2="443.5" stroke="#222" stroke-width="1"/><line x1="577.50" y1="440.5" x2="577.50" y2="443.5" stroke="#222" stroke-width="1"/><line x1="581.50" y1="440.5" x2="581.50" y2="443.5" stroke="#222" stroke-width="1"/><line x1="585.50" y1="440.5" x2="585.50" y2="443.5" stroke="#222" stroke-width="1"/><line x1="590.50" y1="440.5" x2="590.50" y2="443.5" stroke="#222" stroke-width="1"/><line x1="594.50" y1="440.5" x2="594.50" y2="446.5" stroke="#222" stroke-width="1"/><line x1="598.50" y1="440.5" x2="598.50" y2="443.5" stroke="#222" stroke-width="1"/><line x1="603.50" y1="440.5" x2="603.50" y2="443.5" stroke="#222" stroke-width="1"/><line x1="607.50" y1="440.5" x2="607.50" y2="443.5" stroke="#222" stroke-width="1"/><line x1="611.50" y1="440.5" x2="611.50" y2="443.5" stroke="#222" stroke-width="1"/><line x1="616.50" y1="440.5" x2="616.50" y2="443.5" stroke="#222" stroke-width="1"/><line x1="620.50" y1="440.5" x2="620.50" y2="443.5" stroke="#222" stroke-width="1"/><line x1="624.50" y1="440.5" x2="624.50" y2="443.5" stroke="#222" stroke-width="1"/><line x1="628.50" y1="440.5" x2="628.50" y2="443.5" stroke="#222" stroke-width="1"/><line x1="633.50" y1="440.5" x2="633.50" y2="443.5" stroke="#222" stroke-width="1"/><line x1="637.50" y1="440.5" x2="637.50" y2="446.5" stroke="#222" stroke-width="1"/><line x1="641.50" y1="440.5" x2="641.50" y2="443.5" stroke="#222" stroke-width="1"/><line x1="646.50" y1="440.5" x2="646.50" y2="443.5" stroke="#222" stroke-width="1"/><line x1="650.50" y1="440.5" x2="650.50" y2="443.5" stroke="#222" stroke-width="1"/><line x1="654.50" y1="440.5" x2="654.50" y2="443.5" stroke="#222" stroke-width="1"/><line x1="659.50" y1="440.5" x2="659.50" y2="443.5" stroke="#222" stroke-width="1"/><line x1="663.50" y1="440.5" x2="663.50" y2="443.5" stroke="#222" stroke-width="1"/><line x1="667.50" y1="440.5" x2="667.50" y2="443.5" stroke="#222" stroke-width="1"/><line x1="671.50" y1="440.5" x2="671.50" y2="443.5" stroke="#222" stroke-width="1"/><line x1="676.50" y1="440.5" x2="676.50" y2="443.5" stroke="#222" stroke-width="1"/><line x1="680.50" y1="440.5" x2="680.50" y2="446.5" stroke="#222" stroke-width="1"/><line x1="684.50" y1="440.5" x2="684.50" y2="443.5" stroke="#222" stroke-width="1"/><line x1="689.50" y1="440.5" x2="689.50" y2="443.5" stroke="#222" stroke-width="1"/><line x1="693.50" y1="440.5" x2="693.50" y2="443.5" stroke="#222" stroke-width="1"/><line x1="697.50" y1="440.5" x2="697.50" y2="443.5" stroke="#222" stroke-width="1"/><line x1="702.50" y1="440.5" x2="702.50" y2="443.5" stroke="#222" stroke-width="1"/><line x1="706.50" y1="440.5" x2="706.50" y2="443.5" stroke="#222" stroke-width="1"/><line x1="710.50" y1="440.5" x2="710.50" y2="443.5" stroke="#222" stroke-width="1"/><line x1="714.50" y1="440.5" x2="714.50" y2="443.5" stroke="#222" stroke-width="1"/><line x1="719.50" y1="440.5" x2="719.50" y2="443.5" stroke="#222" stroke-width="1"/><line x1="723.50" y1="440.5" x2="723.50" y2="446.5" stroke="#222" stroke-width="1"/><line x1="727.50" y1="440.5" x2="727.50" y2="443.5" stroke="#222" stroke-width="1"/><line x1="732.50" y1="440.5" x2="732.50" y2="443.5" stroke="#222" stroke-width="1"/><line x1="736.50" y1="440.5" x2="736.50" y2="443.5" stroke="#222" stroke-width="1"/><line x1="740.50" y1="440.5" x2="740.50" y2="443.5" stroke="#222" stroke-width="1"/><line x1="745.50" y1="440.5" x2="745.50" y2="443.5" stroke="#222" stroke-width="1"/><line x1="749.50" y1="440.5" x2="749.50" y2="443.5" stroke="#222" stroke-width="1"/><line x1="753.50" y1="440.5" x2="753.50" y2="443.5" stroke="#222" stroke-width="1"/><line x1="757.50" y1="440.5" x2="757.50" y2="443.5" stroke="#222" stroke-width="1"/><line x1="762.50" y1="440.5" x2="762.50" y2="443.5" stroke="#222" stroke-width="1"/><line x1="766.50" y1="440.5" x2="766.50" y2="446.5" stroke="#222" stroke-width="1"/><line x1="770.50" y1="440.5" x2="770.50" y2="443.5" stroke="#222" stroke-width="1"/><line x1="775.50" y1="440.5" x2="775.50" y2="443.5" stroke="#222" stroke-width="1"/><line x1="779.50" y1="440.5" x2="779.50" y2="443.5" stroke="#222" stroke-width="1"/><line x1="783.50" y1="440.5" x2="783.50" y2="443.5" stroke="#222" stroke-width="1"/><line x1="788.50" y1="440.5" x2="788.50" y2="443.5" stroke="#222" stroke-width="1"/><line x1="792.50" y1="440.5" x2="792.50" y2="443.5" stroke="#222" stroke-width="1"/><line x1="796.50" y1="440.5" x2="796.50" y2="443.5" stroke="#222" stroke-width="1"/><line x1="800.50" y1="440.5" x2="800.50" y2="443.5" stroke="#222" stroke-width="1"/><line x1="805.50" y1="440.5" x2="805.50" y2="443.5" stroke="#222" stroke-width="1"/><text x="379.5" y="456.5" font-size="9" text-anchor="middle" font-weight="normal" fill="#222">00:36</text><text x="422.5" y="456.5" font-size="9" text-anchor="middle" font-weight="normal" fill="#222">01:24</text><text x="465.5" y="456.5" font-size="9" text-anchor="middle" font-weight="normal" fill="#222">02:12</text><text x="508.5" y="456.5" font-size="9" text-anchor="middle" font-weight="normal" fill="#222">03:00</text><text x="551.5" y="456.5" font-size="9" text-anchor="middle" font-weight="normal" fill="#222">03:48</text><text x="594.5" y="456.5" font-size="9" text-anchor="middle" font-weight="normal" fill="#222">04:36</text><text x="637.5" y="456.5" font-size="9" text-anchor="middle" font-weight="normal" fill="#222">05:24</text><text x="680.5" y="456.5" font-size="9" text-anchor="middle" font-weight="normal" fill="#222">06:12</text><text x="723.5" y="456.5" font-size="9" text-anchor="middle" font-weight="normal" fill="#222">07:00</text><text x="766.5" y="456.5" font-size="9" text-anchor="middle" font-weight="normal" fill="#222">07:48</text><text transform="translate(305.3,387) rotate(-90) scale(1,1.12)" font-size="11.6" font-weight="bold" text-anchor="middle" fill="#222">Leak Rate</text><text x="364.3" y="324.3" font-size="8.55" text-anchor="start" font-weight="normal" fill="#111">Leak Rate: 10.80</text><line x1="754" y1="320.8" x2="765" y2="320.8" stroke="#006400" stroke-width="1.8"/><text x="767.5" y="324.2" font-size="9.2" text-anchor="start" font-weight="normal" fill="#111" textLength="37" lengthAdjust="spacingAndGlyphs">Leak Rate</text><rect x="361.5" y="475.5" width="444.0" height="112.0" fill="#fff"/><line x1="361.5" y1="484.50" x2="805.5" y2="484.50" stroke="#f6f6f6" stroke-width="1"/><line x1="361.5" y1="494.50" x2="805.5" y2="494.50" stroke="#f6f6f6" stroke-width="1"/><line x1="361.5" y1="503.50" x2="805.5" y2="503.50" stroke="#f6f6f6" stroke-width="1"/><line x1="361.5" y1="512.50" x2="805.5" y2="512.50" stroke="#f6f6f6" stroke-width="1"/><line x1="361.5" y1="522.50" x2="805.5" y2="522.50" stroke="#f6f6f6" stroke-width="1"/><line x1="361.5" y1="531.50" x2="805.5" y2="531.50" stroke="#f6f6f6" stroke-width="1"/><line x1="361.5" y1="540.50" x2="805.5" y2="540.50" stroke="#f6f6f6" stroke-width="1"/><line x1="361.5" y1="550.50" x2="805.5" y2="550.50" stroke="#f6f6f6" stroke-width="1"/><line x1="361.5" y1="559.50" x2="805.5" y2="559.50" stroke="#f6f6f6" stroke-width="1"/><line x1="361.5" y1="568.50" x2="805.5" y2="568.50" stroke="#f6f6f6" stroke-width="1"/><line x1="361.5" y1="578.50" x2="805.5" y2="578.50" stroke="#f6f6f6" stroke-width="1"/><line x1="361.5" y1="512.83" x2="805.5" y2="512.83" stroke="#e6e6e6" stroke-width="1"/><line x1="361.5" y1="550.17" x2="805.5" y2="550.17" stroke="#e6e6e6" stroke-width="1"/><line x1="369" y1="475.5" x2="369" y2="587.5" stroke="#40c0ff" stroke-opacity="0.12" stroke-width="1"/><rect x="368.30" y="475.5" width="1.4" height="10" fill="#40c0ff"/><line x1="392.5" y1="475.5" x2="392.5" y2="587.5" stroke="#0000ff" stroke-opacity="0.12" stroke-width="1"/><rect x="391.80" y="475.5" width="1.4" height="10" fill="#0000ff"/><line x1="411.25" y1="475.5" x2="411.25" y2="587.5" stroke="#40c0ff" stroke-opacity="0.12" stroke-width="1"/><rect x="410.55" y="475.5" width="1.4" height="10" fill="#40c0ff"/><line x1="413.6" y1="475.5" x2="413.6" y2="587.5" stroke="#40c0ff" stroke-opacity="0.12" stroke-width="1"/><rect x="412.90" y="475.5" width="1.4" height="10" fill="#40c0ff"/><line x1="416.5" y1="475.5" x2="416.5" y2="587.5" stroke="#800080" stroke-opacity="0.12" stroke-width="1"/><rect x="415.80" y="475.5" width="1.4" height="10" fill="#800080"/><line x1="421.4" y1="475.5" x2="421.4" y2="587.5" stroke="#40c0ff" stroke-opacity="0.12" stroke-width="1"/><rect x="420.70" y="475.5" width="1.4" height="10" fill="#40c0ff"/><line x1="423.4" y1="475.5" x2="423.4" y2="587.5" stroke="#40c0ff" stroke-opacity="0.12" stroke-width="1"/><rect x="422.70" y="475.5" width="1.4" height="10" fill="#40c0ff"/><line x1="425.7" y1="475.5" x2="425.7" y2="587.5" stroke="#40c0ff" stroke-opacity="0.12" stroke-width="1"/><rect x="425.00" y="475.5" width="1.4" height="10" fill="#40c0ff"/><line x1="433.1" y1="475.5" x2="433.1" y2="587.5" stroke="#40c0ff" stroke-opacity="0.12" stroke-width="1"/><rect x="432.40" y="475.5" width="1.4" height="10" fill="#40c0ff"/><line x1="434.7" y1="475.5" x2="434.7" y2="587.5" stroke="#40c0ff" stroke-opacity="0.12" stroke-width="1"/><rect x="434.00" y="475.5" width="1.4" height="10" fill="#40c0ff"/><line x1="435.9" y1="475.5" x2="435.9" y2="587.5" stroke="#800080" stroke-opacity="0.12" stroke-width="1"/><rect x="435.20" y="475.5" width="1.4" height="10" fill="#800080"/><line x1="488.8" y1="475.5" x2="488.8" y2="587.5" stroke="#800080" stroke-opacity="0.12" stroke-width="1"/><rect x="488.10" y="475.5" width="1.4" height="10" fill="#800080"/><line x1="499" y1="475.5" x2="499" y2="587.5" stroke="#40c0ff" stroke-opacity="0.12" stroke-width="1"/><rect x="498.30" y="475.5" width="1.4" height="10" fill="#40c0ff"/><line x1="508.7" y1="475.5" x2="508.7" y2="587.5" stroke="#40c0ff" stroke-opacity="0.12" stroke-width="1"/><rect x="508.00" y="475.5" width="1.4" height="10" fill="#40c0ff"/><line x1="523.4" y1="475.5" x2="523.4" y2="587.5" stroke="#40c0ff" stroke-opacity="0.12" stroke-width="1"/><rect x="522.70" y="475.5" width="1.4" height="10" fill="#40c0ff"/><line x1="644.2" y1="475.5" x2="644.2" y2="587.5" stroke="#40c0ff" stroke-opacity="0.12" stroke-width="1"/><rect x="643.50" y="475.5" width="1.4" height="10" fill="#40c0ff"/><line x1="647" y1="475.5" x2="647" y2="587.5" stroke="#800080" stroke-opacity="0.12" stroke-width="1"/><rect x="646.30" y="475.5" width="1.4" height="10" fill="#800080"/><line x1="654.3" y1="475.5" x2="654.3" y2="587.5" stroke="#40c0ff" stroke-opacity="0.12" stroke-width="1"/><rect x="653.60" y="475.5" width="1.4" height="10" fill="#40c0ff"/><line x1="662.5" y1="475.5" x2="662.5" y2="587.5" stroke="#40c0ff" stroke-opacity="0.12" stroke-width="1"/><rect x="661.80" y="475.5" width="1.4" height="10" fill="#40c0ff"/><line x1="663.9" y1="475.5" x2="663.9" y2="587.5" stroke="#800080" stroke-opacity="0.12" stroke-width="1"/><rect x="663.20" y="475.5" width="1.4" height="10" fill="#800080"/><line x1="691.3" y1="475.5" x2="691.3" y2="587.5" stroke="#40c0ff" stroke-opacity="0.12" stroke-width="1"/><rect x="690.60" y="475.5" width="1.4" height="10" fill="#40c0ff"/><line x1="720.8" y1="475.5" x2="720.8" y2="587.5" stroke="#40c0ff" stroke-opacity="0.12" stroke-width="1"/><rect x="720.10" y="475.5" width="1.4" height="10" fill="#40c0ff"/><line x1="752.8" y1="475.5" x2="752.8" y2="587.5" stroke="#800080" stroke-opacity="0.12" stroke-width="1"/><rect x="752.10" y="475.5" width="1.4" height="10" fill="#800080"/><line x1="757.4" y1="475.5" x2="757.4" y2="587.5" stroke="#800080" stroke-opacity="0.12" stroke-width="1"/><rect x="756.70" y="475.5" width="1.4" height="10" fill="#800080"/><line x1="775.2" y1="475.5" x2="775.2" y2="587.5" stroke="#40c0ff" stroke-opacity="0.12" stroke-width="1"/><rect x="774.50" y="475.5" width="1.4" height="10" fill="#40c0ff"/><line x1="793.3" y1="475.5" x2="793.3" y2="587.5" stroke="#40c0ff" stroke-opacity="0.12" stroke-width="1"/><rect x="792.60" y="475.5" width="1.4" height="10" fill="#40c0ff"/><path d="M361.0 557.6V573.3M361.5 558.8V572.1M362.0 554.3V572.2M362.5 555.3V568.5M363.0 561.5V576.2M363.5 558.1V571.4M364.0 555.7V568.8M364.5 558.2V569.9M365.0 555.9V567.6M365.5 553.6V565.3M366.0 551.3V563.0M366.5 549.0V560.7M367.0 546.7V558.4M367.5 544.4V556.1M368.0 542.1V553.8M368.5 539.8V551.6M369.0 537.5V549.3M369.5 536.0V548.0M370.0 534.2V548.2M370.5 535.0V547.0M371.0 534.3V545.6M371.5 536.2V548.2M372.0 536.4V547.2M372.5 536.4V545.5M373.0 534.5V546.0M373.5 534.8V545.8M374.0 534.6V547.8M374.5 533.0V547.2M375.0 536.5V546.0M375.5 535.5V547.2M376.0 536.5V546.5M376.5 534.6V547.7M377.0 536.3V545.8M377.5 535.7V545.5M378.0 532.6V547.2M378.5 535.9V547.0M379.0 535.8V548.2M379.5 536.4V546.1M380.0 533.8V547.0M380.5 536.4V548.4M381.0 533.1V547.6M381.5 536.4V548.3M382.0 533.8V546.5M382.5 536.4V547.4M383.0 534.7V547.0M383.5 536.4V545.8M384.0 536.4V545.5M384.5 534.9V545.9M385.0 532.6V547.7M385.5 535.3V545.5M386.0 535.6V546.2M386.5 536.5V548.0M387.0 533.8V546.1M387.5 534.1V546.6M388.0 535.1V545.6M388.5 533.7V545.9M389.0 536.5V546.7M389.5 536.1V546.2M390.0 535.6V545.6M390.5 536.5V546.6M391.0 536.3V547.9M391.5 534.9V547.0M392.0 535.3V548.0M392.5 536.5V546.5M393.0 536.1V545.5M393.5 533.4V546.5M394.0 534.3V547.2M394.5 536.5V546.3M395.0 536.0V545.5M395.5 535.0V546.9M396.0 535.2V545.8M396.5 536.1V546.3M397.0 535.8V546.9M397.5 536.0V547.7M398.0 535.0V547.0M398.5 536.0V546.0M399.0 533.3V548.2M399.5 534.1V547.4M400.0 532.5V545.6M400.5 536.1V545.9M401.0 536.0V545.7M401.5 536.5V547.6M402.0 535.4V546.6M402.5 533.8V545.5M403.0 535.7V546.1M403.5 535.9V545.8M404.0 532.8V545.5M404.5 535.7V547.5M405.0 534.3V545.5M405.5 536.5V545.6M406.0 535.7V546.0M406.5 533.6V548.4M407.0 535.2V545.6M407.5 534.3V547.0M408.0 533.2V545.9M408.5 535.1V547.5M409.0 535.6V546.3M409.5 534.6V545.7M410.0 534.4V546.5M410.5 533.8V545.6M411.0 533.6V547.3M411.5 534.3V547.7M412.0 535.5V546.1M412.5 536.2V546.8M413.0 536.5V546.2M413.5 532.5V545.8M414.0 536.4V546.0M414.5 534.4V547.6M415.0 536.4V546.3M415.5 533.7V547.7M416.0 534.6V545.8M416.5 536.5V546.0M417.0 536.3V548.0M417.5 536.5V545.5M418.0 532.6V547.3M418.5 535.5V546.2M419.0 533.2V547.0M419.5 536.1V546.0M420.0 532.5V545.7M420.5 536.5V545.5M421.0 533.6V545.6M421.5 535.2V546.0M422.0 535.3V547.8M422.5 536.1V545.6M423.0 535.8V546.1M423.5 536.0V546.7M424.0 535.4V545.7M424.5 536.4V545.8M425.0 533.6V547.5M425.5 536.3V545.8M426.0 535.5V546.2M426.5 536.5V545.6M427.0 535.5V547.5M427.5 533.6V545.6M428.0 536.4V546.9M428.5 536.5V548.0M429.0 533.5V547.8M429.5 536.5V548.2M430.0 536.3V547.7M430.5 536.3V545.9M431.0 536.1V545.5M431.5 536.5V547.1M432.0 535.7V545.5M432.5 535.2V547.5M433.0 536.2V546.4M433.5 535.9V545.7M434.0 535.7V545.6M434.5 535.6V548.4M435.0 536.4V547.7M435.5 536.3V548.4M436.0 535.5V545.9M436.5 533.5V546.3M437.0 536.5V546.7M437.5 535.6V547.1M438.0 532.6V545.7M438.5 536.5V546.1M439.0 535.2V548.5M439.5 536.3V546.2M440.0 536.0V547.7M440.5 533.7V546.0M441.0 532.8V545.5M441.5 536.2V545.5M442.0 536.2V548.0M442.5 532.5V546.6M443.0 535.1V546.1M443.5 535.9V546.3M444.0 534.9V545.6M444.5 533.3V546.8M445.0 533.4V545.6M445.5 535.5V547.1M446.0 533.7V545.8M446.5 536.3V546.1M447.0 535.7V546.1M447.5 536.4V545.7M448.0 534.1V548.3M448.5 536.2V545.6M449.0 534.1V547.8M449.5 536.1V546.4M450.0 532.6V547.9M450.5 535.2V546.7M451.0 535.3V546.4M451.5 536.0V548.5M452.0 534.2V546.2M452.5 536.3V545.5M453.0 535.9V546.3M453.5 534.0V548.2M454.0 536.4V546.7M454.5 533.8V546.9M455.0 534.4V545.6M455.5 535.5V546.8M456.0 536.5V545.5M456.5 536.5V545.5M457.0 535.7V546.9M457.5 533.8V548.0M458.0 535.0V548.2M458.5 535.2V546.4M459.0 536.5V545.9M459.5 536.5V547.2M460.0 536.4V545.5M460.5 536.4V545.6M461.0 536.0V547.6M461.5 535.5V546.2M462.0 536.3V546.0M462.5 536.5V547.6M463.0 535.9V546.8M463.5 536.0V545.9M464.0 536.4V545.6M464.5 532.7V546.3M465.0 534.4V546.4M465.5 536.2V545.6M466.0 534.3V547.5M466.5 536.3V546.4M467.0 536.4V546.4M467.5 536.5V547.4M468.0 536.5V547.1M468.5 534.1V546.5M469.0 536.3V545.5M469.5 536.4V546.9M470.0 533.3V546.2M470.5 536.4V547.9M471.0 536.5V546.7M471.5 534.4V545.6M472.0 535.2V545.7M472.5 536.3V546.6M473.0 536.5V546.6M473.5 536.2V548.4M474.0 535.9V545.6M474.5 533.5V546.8M475.0 536.3V545.5M475.5 536.4V547.4M476.0 536.2V547.9M476.5 533.8V545.5M477.0 536.4V547.4M477.5 535.1V545.8M478.0 535.2V545.8M478.5 536.5V548.1M479.0 536.5V546.0M479.5 533.1V546.2M480.0 532.8V546.6M480.5 534.6V546.9M481.0 533.8V545.5M481.5 534.8V545.6M482.0 534.4V546.5M482.5 534.6V547.4M483.0 534.0V546.2M483.5 536.4V546.3M484.0 535.4V546.3M484.5 536.2V545.5M485.0 533.0V545.8M485.5 536.2V547.2M486.0 536.3V545.8M486.5 534.2V546.2M487.0 533.3V546.4M487.5 536.0V545.6M488.0 535.5V546.3M488.5 536.0V545.6M489.0 535.7V545.5M489.5 536.1V547.2M490.0 533.6V545.7M490.5 534.2V548.5M491.0 535.6V547.6M491.5 534.7V545.9M492.0 533.6V545.7M492.5 533.5V546.4M493.0 536.5V546.2M493.5 534.4V547.2M494.0 535.9V546.7M494.5 536.1V545.5M495.0 536.4V547.5M495.5 536.4V546.5M496.0 536.3V545.8M496.5 534.8V546.1M497.0 535.3V545.6M497.5 533.2V545.5M498.0 534.0V548.3M498.5 533.6V545.9M499.0 536.2V547.3M499.5 535.0V548.4M500.0 533.8V545.5M500.5 535.2V546.0M501.0 536.4V548.4M501.5 534.6V545.8M502.0 535.4V546.5M502.5 533.1V545.7M503.0 536.0V546.2M503.5 535.7V545.6M504.0 536.3V545.9M504.5 533.3V546.2M505.0 534.9V546.7M505.5 533.0V545.6M506.0 535.0V546.9M506.5 534.5V545.9M507.0 535.7V548.4M507.5 535.5V548.5M508.0 535.0V546.7M508.5 535.9V548.5M509.0 535.9V546.0M509.5 536.4V548.0M510.0 535.7V545.7M510.5 536.4V545.6M511.0 536.0V545.5M511.5 535.4V547.8M512.0 533.2V548.3M512.5 534.0V548.1M513.0 536.5V546.1M513.5 532.8V545.8M514.0 534.6V546.0M514.5 535.6V547.5M515.0 535.0V547.1M515.5 536.3V545.5M516.0 536.5V546.6M516.5 535.6V545.9M517.0 534.4V546.0M517.5 535.8V545.7M518.0 536.4V547.2M518.5 535.6V545.7M519.0 536.5V546.6M519.5 536.5V545.8M520.0 535.9V545.5M520.5 536.5V548.1M521.0 536.2V547.8M521.5 536.5V545.7M522.0 535.6V545.6M522.5 534.9V545.7M523.0 534.3V548.4M523.5 533.6V545.5M524.0 536.5V545.5M524.5 533.3V547.4M525.0 535.1V545.8M525.5 535.6V547.7M526.0 535.3V545.7M613.0 558.0V572.5M613.5 558.4V570.9M614.0 555.3V569.1M614.5 559.2V573.0M615.0 561.2V577.0M615.5 556.4V570.3M616.0 559.2V574.2M616.5 557.8V572.3M617.0 560.0V574.5M617.5 557.2V570.1M618.0 557.3V572.4M618.5 558.1V574.4M619.0 561.3V575.2M619.5 556.9V571.5M620.0 558.2V569.9M620.5 555.6V567.4M621.0 553.1V564.8M621.5 550.5V562.3M622.0 548.0V559.7M622.5 545.4V557.2M623.0 542.9V554.6M623.5 540.3V552.1M624.0 537.8V549.5M624.5 536.0V547.0M625.0 535.5V546.6M625.5 534.2V546.1M626.0 535.1V545.5M626.5 536.0V546.5M627.0 533.2V546.0M627.5 533.6V547.2M628.0 536.4V546.4M628.5 536.1V547.1M629.0 534.2V546.2M629.5 536.4V546.4M630.0 535.6V546.1M630.5 536.5V546.3M631.0 533.9V546.2M631.5 536.5V546.5M632.0 536.4V546.3M632.5 536.3V547.3M633.0 536.2V547.4M633.5 535.5V546.0M634.0 534.9V546.5M634.5 535.6V546.1M635.0 533.7V545.9M635.5 536.3V545.5M636.0 533.5V547.9M636.5 533.2V546.3M637.0 535.1V545.5M637.5 536.2V546.7M638.0 536.4V546.1M638.5 536.0V547.9M639.0 536.4V547.9M639.5 536.5V545.6M640.0 535.6V546.3M640.5 536.5V546.5M641.0 533.3V545.5M641.5 535.3V547.9M642.0 535.1V546.0M642.5 534.7V546.3M643.0 536.2V545.6M643.5 536.2V545.7M644.0 533.9V546.1M644.5 536.2V547.5M645.0 534.8V546.4M645.5 534.0V545.5M646.0 532.5V545.5M646.5 534.6V547.4M647.0 534.8V545.6M647.5 532.9V545.9M648.0 534.9V546.3M648.5 535.0V548.2M649.0 533.2V547.9M649.5 534.2V545.7M650.0 536.1V547.1M650.5 534.7V548.1M651.0 535.7V547.3M651.5 532.6V546.6M652.0 534.8V546.5M652.5 535.6V545.9M653.0 536.5V546.5M653.5 532.9V546.3M654.0 534.3V545.5M654.5 533.5V545.9M655.0 535.5V548.5M655.5 536.0V545.7M656.0 533.5V546.3M656.5 536.4V546.6M657.0 536.2V546.5M657.5 536.3V545.5M658.0 535.3V546.0M658.5 534.3V545.6M659.0 535.9V546.7M659.5 535.7V547.0M660.0 533.8V545.6M660.5 535.9V545.8M661.0 534.6V548.4M661.5 534.3V547.0M662.0 536.3V546.1M662.5 535.9V545.5M663.0 536.5V545.8M663.5 536.0V545.7M664.0 536.1V545.7M664.5 536.4V546.8M665.0 536.2V547.3M665.5 536.2V545.6M666.0 533.1V545.6M666.5 536.5V546.2M667.0 536.2V545.9M667.5 535.7V545.6M668.0 535.7V545.5M668.5 535.2V546.0M669.0 536.0V548.3M669.5 535.5V547.4M670.0 536.5V547.1M670.5 536.5V545.5M671.0 533.0V545.8M671.5 534.6V545.6M672.0 535.2V547.2M672.5 536.3V546.3M673.0 533.6V545.8M673.5 536.1V545.5M674.0 534.3V546.8M674.5 533.2V547.5M675.0 534.9V547.3M675.5 533.8V547.0M676.0 533.6V546.7M676.5 534.9V545.9M677.0 536.3V546.0M677.5 534.6V545.9M678.0 534.7V547.2M678.5 533.1V546.9M679.0 533.1V546.2M679.5 535.4V546.9M680.0 536.4V546.1M680.5 535.4V546.9M681.0 536.1V545.7M681.5 534.6V545.5M682.0 536.4V548.3M682.5 534.8V546.3M683.0 533.5V547.0M683.5 535.7V547.7M684.0 536.2V546.1M684.5 536.4V545.7M685.0 536.4V545.5M685.5 533.0V546.1M686.0 532.5V546.4M686.5 536.5V546.5M687.0 534.0V546.0M687.5 536.1V545.7M688.0 536.1V547.2M688.5 536.0V546.2M689.0 536.0V547.0M689.5 535.9V547.3M690.0 536.1V548.5M690.5 536.5V547.4M691.0 533.4V546.5M691.5 534.0V546.7M692.0 536.5V547.9M692.5 535.7V546.9M693.0 533.8V546.2M693.5 536.3V547.6M694.0 534.5V547.1M694.5 534.9V548.4M695.0 532.7V547.3M695.5 536.1V546.3M696.0 535.5V547.2M696.5 535.9V547.2M697.0 535.7V546.9M697.5 536.4V547.9M698.0 534.5V545.6M698.5 536.5V546.6M699.0 535.7V547.8M699.5 536.5V547.5M700.0 534.0V545.7M700.5 536.5V547.9M701.0 536.1V548.0M701.5 535.5V548.2M702.0 533.7V547.0M702.5 535.9V548.2M703.0 535.6V545.5M703.5 533.5V545.6M704.0 536.3V546.1M704.5 535.5V547.8M705.0 536.1V548.0M705.5 536.5V545.6M706.0 534.4V546.8M706.5 533.1V545.6M707.0 536.4V546.4M707.5 532.8V547.0M708.0 533.9V548.2M708.5 536.2V545.5M709.0 534.6V545.5M709.5 536.4V545.8M710.0 536.5V546.9M710.5 536.4V547.2M711.0 532.6V547.1M711.5 535.2V546.7M712.0 535.9V545.5M712.5 534.6V547.0M713.0 536.2V547.3M713.5 533.5V545.9M714.0 533.9V546.0M714.5 535.6V547.6M715.0 533.0V548.4M715.5 533.7V547.1M716.0 535.9V545.6M716.5 535.7V545.6M717.0 535.7V545.5M717.5 536.2V545.5M718.0 533.8V546.5M718.5 534.3V546.5M719.0 533.6V546.1M719.5 535.6V545.5M720.0 535.8V545.6M720.5 532.7V545.8M721.0 535.7V545.6M721.5 535.7V546.2M722.0 533.5V547.3M722.5 536.1V546.1M723.0 533.1V546.8M723.5 532.9V546.3M724.0 536.3V548.4M724.5 534.5V548.2M725.0 533.6V548.3M725.5 533.1V545.8M726.0 536.5V548.2M726.5 533.1V546.8M727.0 533.0V545.6M727.5 533.7V546.8M728.0 532.8V545.5M728.5 535.6V547.7M729.0 534.9V545.9M729.5 535.7V545.6M730.0 534.8V546.6M730.5 535.3V548.4M731.0 535.5V546.1M731.5 536.5V545.5M732.0 535.3V546.5M732.5 536.2V546.2M733.0 532.6V548.4M733.5 536.4V546.1M734.0 535.9V548.4M734.5 533.0V546.3M735.0 535.9V546.7M735.5 535.0V547.3M736.0 536.1V545.8M736.5 536.5V545.9M737.0 536.4V548.3M737.5 533.1V546.9M738.0 532.9V547.2M738.5 535.4V547.7M739.0 535.5V545.9M739.5 532.6V545.7M740.0 535.9V545.8M740.5 535.2V546.1M741.0 536.1V546.4M741.5 536.3V547.7M742.0 533.2V545.8M742.5 536.5V545.7M743.0 532.9V548.4M743.5 536.5V546.6M744.0 534.9V547.1M744.5 535.6V545.6M745.0 534.9V547.3M745.5 536.0V545.8M746.0 536.4V545.5M746.5 536.3V546.2M747.0 533.5V546.6M747.5 535.1V546.0M748.0 535.9V547.1M748.5 535.0V546.0M749.0 536.4V545.5M749.5 535.6V546.0M750.0 536.3V546.5M750.5 536.3V545.6M751.0 534.0V546.4M751.5 532.9V545.5M752.0 535.6V547.2M752.5 536.5V546.7M753.0 536.5V546.5M753.5 535.7V545.9M754.0 536.4V547.1M754.5 536.0V545.8M755.0 535.9V547.0M755.5 535.1V546.2M756.0 534.1V546.0M756.5 533.2V546.2M757.0 535.1V545.6M757.5 535.9V548.3M758.0 536.5V546.7M758.5 535.8V547.0M759.0 532.9V546.7M759.5 536.4V546.6M760.0 535.6V548.0M760.5 536.2V546.7M761.0 535.2V545.5M761.5 536.4V546.6M762.0 535.3V545.6M762.5 536.1V547.0M763.0 532.7V547.4M763.5 534.6V546.4M764.0 535.5V545.7M764.5 532.9V546.0M765.0 535.6V545.7M765.5 536.2V546.2M766.0 534.8V545.6M766.5 536.2V546.1M767.0 535.5V546.5M767.5 535.8V546.0M768.0 536.4V547.3M768.5 533.7V546.2M769.0 536.5V546.6M769.5 536.1V547.1M770.0 535.6V545.6M770.5 532.5V546.1M771.0 533.2V545.8M771.5 536.4V545.6M772.0 536.4V547.5M772.5 533.9V546.0M773.0 536.2V545.5M773.5 535.6V547.4M774.0 536.5V546.3M774.5 536.4V545.9M775.0 535.6V545.5M775.5 535.6V547.7M776.0 533.9V548.1M776.5 535.7V545.9M777.0 535.4V545.7M777.5 536.5V546.5M778.0 536.3V545.9M778.5 535.5V545.8M779.0 536.4V547.4M779.5 535.5V547.1M780.0 536.0V548.1M780.5 535.9V545.8M781.0 535.3V546.1M781.5 533.8V545.6M782.0 534.9V545.7M782.5 534.6V548.1M783.0 536.2V547.7M783.5 535.6V548.2M784.0 533.1V548.4M784.5 536.5V545.9M785.0 535.1V547.3M785.5 535.1V547.9M786.0 536.4V545.6M786.5 533.4V546.8M787.0 534.9V545.5M787.5 536.5V545.6M788.0 536.5V546.2M788.5 535.5V545.8M789.0 536.4V545.6M789.5 535.4V547.6M790.0 536.1V545.7M790.5 535.4V547.2M791.0 536.1V548.2M791.5 536.2V546.9M792.0 535.0V545.9M792.5 536.5V545.9M793.0 535.6V545.6M793.5 533.5V545.5M794.0 536.2V545.5M794.5 534.8V545.5M795.0 534.3V546.4M795.5 535.0V547.8M796.0 536.4V548.0M796.5 535.5V546.3M797.0 534.0V548.1M797.5 533.6V546.4M798.0 532.5V545.5M798.5 536.3V545.8M799.0 535.3V546.6M799.5 536.5V545.8M800.0 534.6V547.8M800.5 536.5V545.6M801.0 533.1V546.5M801.5 535.1V545.5M802.0 536.5V547.5M802.5 535.0V548.5M803.0 535.4V547.0M803.5 536.4V547.2M804.0 533.6V547.6M804.5 536.4V546.9M805.0 536.3V545.6" stroke="#0000ff" stroke-width="1" fill="none"/><line x1="413.9" y1="521" x2="413.9" y2="540" stroke="#0000ff" stroke-width="0.9"/><line x1="435.4" y1="510" x2="435.4" y2="540" stroke="#0000ff" stroke-width="0.9"/><line x1="432.5" y1="525" x2="432.5" y2="552.6" stroke="#0000ff" stroke-width="0.9"/><line x1="499.4" y1="523.8" x2="499.4" y2="540" stroke="#0000ff" stroke-width="0.9"/><line x1="664.6" y1="528.7" x2="664.6" y2="540" stroke="#0000ff" stroke-width="0.9"/><line x1="785.4" y1="524.4" x2="785.4" y2="540" stroke="#0000ff" stroke-width="0.9"/><line x1="656" y1="540" x2="656" y2="556" stroke="#0000ff" stroke-width="0.9"/><line x1="366" y1="570" x2="366" y2="576" stroke="#0000ff" stroke-width="0.9"/><rect x="361.5" y="475.5" width="444.0" height="112.0" fill="none" stroke="#333" stroke-width="1"/><text x="356" y="480.7" font-size="9" text-anchor="end" font-weight="normal" fill="#222">21.0</text><line x1="357" y1="475.50" x2="361.5" y2="475.50" stroke="#222" stroke-width="1"/><text x="356" y="518.0333333333334" font-size="9" text-anchor="end" font-weight="normal" fill="#222">14.0</text><line x1="357" y1="512.50" x2="361.5" y2="512.50" stroke="#222" stroke-width="1"/><text x="356" y="555.3666666666667" font-size="9" text-anchor="end" font-weight="normal" fill="#222">7.0</text><line x1="357" y1="550.50" x2="361.5" y2="550.50" stroke="#222" stroke-width="1"/><text x="356" y="592.7" font-size="9" text-anchor="end" font-weight="normal" fill="#222">0.0</text><line x1="357" y1="587.50" x2="361.5" y2="587.50" stroke="#222" stroke-width="1"/><line x1="359" y1="475.50" x2="361.5" y2="475.50" stroke="#333" stroke-width="1"/><line x1="359" y1="484.50" x2="361.5" y2="484.50" stroke="#333" stroke-width="1"/><line x1="359" y1="494.50" x2="361.5" y2="494.50" stroke="#333" stroke-width="1"/><line x1="359" y1="503.50" x2="361.5" y2="503.50" stroke="#333" stroke-width="1"/><line x1="359" y1="512.50" x2="361.5" y2="512.50" stroke="#333" stroke-width="1"/><line x1="359" y1="522.50" x2="361.5" y2="522.50" stroke="#333" stroke-width="1"/><line x1="359" y1="531.50" x2="361.5" y2="531.50" stroke="#333" stroke-width="1"/><line x1="359" y1="540.50" x2="361.5" y2="540.50" stroke="#333" stroke-width="1"/><line x1="359" y1="550.50" x2="361.5" y2="550.50" stroke="#333" stroke-width="1"/><line x1="359" y1="559.50" x2="361.5" y2="559.50" stroke="#333" stroke-width="1"/><line x1="359" y1="568.50" x2="361.5" y2="568.50" stroke="#333" stroke-width="1"/><line x1="359" y1="578.50" x2="361.5" y2="578.50" stroke="#333" stroke-width="1"/><line x1="359" y1="587.50" x2="361.5" y2="587.50" stroke="#333" stroke-width="1"/><line x1="366.50" y1="587.5" x2="366.50" y2="590.5" stroke="#222" stroke-width="1"/><line x1="370.50" y1="587.5" x2="370.50" y2="590.5" stroke="#222" stroke-width="1"/><line x1="375.50" y1="587.5" x2="375.50" y2="590.5" stroke="#222" stroke-width="1"/><line x1="379.50" y1="587.5" x2="379.50" y2="593.5" stroke="#222" stroke-width="1"/><line x1="383.50" y1="587.5" x2="383.50" y2="590.5" stroke="#222" stroke-width="1"/><line x1="388.50" y1="587.5" x2="388.50" y2="590.5" stroke="#222" stroke-width="1"/><line x1="392.50" y1="587.5" x2="392.50" y2="590.5" stroke="#222" stroke-width="1"/><line x1="396.50" y1="587.5" x2="396.50" y2="590.5" stroke="#222" stroke-width="1"/><line x1="401.50" y1="587.5" x2="401.50" y2="590.5" stroke="#222" stroke-width="1"/><line x1="405.50" y1="587.5" x2="405.50" y2="590.5" stroke="#222" stroke-width="1"/><line x1="409.50" y1="587.5" x2="409.50" y2="590.5" stroke="#222" stroke-width="1"/><line x1="413.50" y1="587.5" x2="413.50" y2="590.5" stroke="#222" stroke-width="1"/><line x1="418.50" y1="587.5" x2="418.50" y2="590.5" stroke="#222" stroke-width="1"/><line x1="422.50" y1="587.5" x2="422.50" y2="593.5" stroke="#222" stroke-width="1"/><line x1="426.50" y1="587.5" x2="426.50" y2="590.5" stroke="#222" stroke-width="1"/><line x1="431.50" y1="587.5" x2="431.50" y2="590.5" stroke="#222" stroke-width="1"/><line x1="435.50" y1="587.5" x2="435.50" y2="590.5" stroke="#222" stroke-width="1"/><line x1="439.50" y1="587.5" x2="439.50" y2="590.5" stroke="#222" stroke-width="1"/><line x1="444.50" y1="587.5" x2="444.50" y2="590.5" stroke="#222" stroke-width="1"/><line x1="448.50" y1="587.5" x2="448.50" y2="590.5" stroke="#222" stroke-width="1"/><line x1="452.50" y1="587.5" x2="452.50" y2="590.5" stroke="#222" stroke-width="1"/><line x1="456.50" y1="587.5" x2="456.50" y2="590.5" stroke="#222" stroke-width="1"/><line x1="461.50" y1="587.5" x2="461.50" y2="590.5" stroke="#222" stroke-width="1"/><line x1="465.50" y1="587.5" x2="465.50" y2="593.5" stroke="#222" stroke-width="1"/><line x1="469.50" y1="587.5" x2="469.50" y2="590.5" stroke="#222" stroke-width="1"/><line x1="474.50" y1="587.5" x2="474.50" y2="590.5" stroke="#222" stroke-width="1"/><line x1="478.50" y1="587.5" x2="478.50" y2="590.5" stroke="#222" stroke-width="1"/><line x1="482.50" y1="587.5" x2="482.50" y2="590.5" stroke="#222" stroke-width="1"/><line x1="487.50" y1="587.5" x2="487.50" y2="590.5" stroke="#222" stroke-width="1"/><line x1="491.50" y1="587.5" x2="491.50" y2="590.5" stroke="#222" stroke-width="1"/><line x1="495.50" y1="587.5" x2="495.50" y2="590.5" stroke="#222" stroke-width="1"/><line x1="499.50" y1="587.5" x2="499.50" y2="590.5" stroke="#222" stroke-width="1"/><line x1="504.50" y1="587.5" x2="504.50" y2="590.5" stroke="#222" stroke-width="1"/><line x1="508.50" y1="587.5" x2="508.50" y2="593.5" stroke="#222" stroke-width="1"/><line x1="512.50" y1="587.5" x2="512.50" y2="590.5" stroke="#222" stroke-width="1"/><line x1="517.50" y1="587.5" x2="517.50" y2="590.5" stroke="#222" stroke-width="1"/><line x1="521.50" y1="587.5" x2="521.50" y2="590.5" stroke="#222" stroke-width="1"/><line x1="525.50" y1="587.5" x2="525.50" y2="590.5" stroke="#222" stroke-width="1"/><line x1="530.50" y1="587.5" x2="530.50" y2="590.5" stroke="#222" stroke-width="1"/><line x1="534.50" y1="587.5" x2="534.50" y2="590.5" stroke="#222" stroke-width="1"/><line x1="538.50" y1="587.5" x2="538.50" y2="590.5" stroke="#222" stroke-width="1"/><line x1="542.50" y1="587.5" x2="542.50" y2="590.5" stroke="#222" stroke-width="1"/><line x1="547.50" y1="587.5" x2="547.50" y2="590.5" stroke="#222" stroke-width="1"/><line x1="551.50" y1="587.5" x2="551.50" y2="593.5" stroke="#222" stroke-width="1"/><line x1="555.50" y1="587.5" x2="555.50" y2="590.5" stroke="#222" stroke-width="1"/><line x1="560.50" y1="587.5" x2="560.50" y2="590.5" stroke="#222" stroke-width="1"/><line x1="564.50" y1="587.5" x2="564.50" y2="590.5" stroke="#222" stroke-width="1"/><line x1="568.50" y1="587.5" x2="568.50" y2="590.5" stroke="#222" stroke-width="1"/><line x1="573.50" y1="587.5" x2="573.50" y2="590.5" stroke="#222" stroke-width="1"/><line x1="577.50" y1="587.5" x2="577.50" y2="590.5" stroke="#222" stroke-width="1"/><line x1="581.50" y1="587.5" x2="581.50" y2="590.5" stroke="#222" stroke-width="1"/><line x1="585.50" y1="587.5" x2="585.50" y2="590.5" stroke="#222" stroke-width="1"/><line x1="590.50" y1="587.5" x2="590.50" y2="590.5" stroke="#222" stroke-width="1"/><line x1="594.50" y1="587.5" x2="594.50" y2="593.5" stroke="#222" stroke-width="1"/><line x1="598.50" y1="587.5" x2="598.50" y2="590.5" stroke="#222" stroke-width="1"/><line x1="603.50" y1="587.5" x2="603.50" y2="590.5" stroke="#222" stroke-width="1"/><line x1="607.50" y1="587.5" x2="607.50" y2="590.5" stroke="#222" stroke-width="1"/><line x1="611.50" y1="587.5" x2="611.50" y2="590.5" stroke="#222" stroke-width="1"/><line x1="616.50" y1="587.5" x2="616.50" y2="590.5" stroke="#222" stroke-width="1"/><line x1="620.50" y1="587.5" x2="620.50" y2="590.5" stroke="#222" stroke-width="1"/><line x1="624.50" y1="587.5" x2="624.50" y2="590.5" stroke="#222" stroke-width="1"/><line x1="628.50" y1="587.5" x2="628.50" y2="590.5" stroke="#222" stroke-width="1"/><line x1="633.50" y1="587.5" x2="633.50" y2="590.5" stroke="#222" stroke-width="1"/><line x1="637.50" y1="587.5" x2="637.50" y2="593.5" stroke="#222" stroke-width="1"/><line x1="641.50" y1="587.5" x2="641.50" y2="590.5" stroke="#222" stroke-width="1"/><line x1="646.50" y1="587.5" x2="646.50" y2="590.5" stroke="#222" stroke-width="1"/><line x1="650.50" y1="587.5" x2="650.50" y2="590.5" stroke="#222" stroke-width="1"/><line x1="654.50" y1="587.5" x2="654.50" y2="590.5" stroke="#222" stroke-width="1"/><line x1="659.50" y1="587.5" x2="659.50" y2="590.5" stroke="#222" stroke-width="1"/><line x1="663.50" y1="587.5" x2="663.50" y2="590.5" stroke="#222" stroke-width="1"/><line x1="667.50" y1="587.5" x2="667.50" y2="590.5" stroke="#222" stroke-width="1"/><line x1="671.50" y1="587.5" x2="671.50" y2="590.5" stroke="#222" stroke-width="1"/><line x1="676.50" y1="587.5" x2="676.50" y2="590.5" stroke="#222" stroke-width="1"/><line x1="680.50" y1="587.5" x2="680.50" y2="593.5" stroke="#222" stroke-width="1"/><line x1="684.50" y1="587.5" x2="684.50" y2="590.5" stroke="#222" stroke-width="1"/><line x1="689.50" y1="587.5" x2="689.50" y2="590.5" stroke="#222" stroke-width="1"/><line x1="693.50" y1="587.5" x2="693.50" y2="590.5" stroke="#222" stroke-width="1"/><line x1="697.50" y1="587.5" x2="697.50" y2="590.5" stroke="#222" stroke-width="1"/><line x1="702.50" y1="587.5" x2="702.50" y2="590.5" stroke="#222" stroke-width="1"/><line x1="706.50" y1="587.5" x2="706.50" y2="590.5" stroke="#222" stroke-width="1"/><line x1="710.50" y1="587.5" x2="710.50" y2="590.5" stroke="#222" stroke-width="1"/><line x1="714.50" y1="587.5" x2="714.50" y2="590.5" stroke="#222" stroke-width="1"/><line x1="719.50" y1="587.5" x2="719.50" y2="590.5" stroke="#222" stroke-width="1"/><line x1="723.50" y1="587.5" x2="723.50" y2="593.5" stroke="#222" stroke-width="1"/><line x1="727.50" y1="587.5" x2="727.50" y2="590.5" stroke="#222" stroke-width="1"/><line x1="732.50" y1="587.5" x2="732.50" y2="590.5" stroke="#222" stroke-width="1"/><line x1="736.50" y1="587.5" x2="736.50" y2="590.5" stroke="#222" stroke-width="1"/><line x1="740.50" y1="587.5" x2="740.50" y2="590.5" stroke="#222" stroke-width="1"/><line x1="745.50" y1="587.5" x2="745.50" y2="590.5" stroke="#222" stroke-width="1"/><line x1="749.50" y1="587.5" x2="749.50" y2="590.5" stroke="#222" stroke-width="1"/><line x1="753.50" y1="587.5" x2="753.50" y2="590.5" stroke="#222" stroke-width="1"/><line x1="757.50" y1="587.5" x2="757.50" y2="590.5" stroke="#222" stroke-width="1"/><line x1="762.50" y1="587.5" x2="762.50" y2="590.5" stroke="#222" stroke-width="1"/><line x1="766.50" y1="587.5" x2="766.50" y2="593.5" stroke="#222" stroke-width="1"/><line x1="770.50" y1="587.5" x2="770.50" y2="590.5" stroke="#222" stroke-width="1"/><line x1="775.50" y1="587.5" x2="775.50" y2="590.5" stroke="#222" stroke-width="1"/><line x1="779.50" y1="587.5" x2="779.50" y2="590.5" stroke="#222" stroke-width="1"/><line x1="783.50" y1="587.5" x2="783.50" y2="590.5" stroke="#222" stroke-width="1"/><line x1="788.50" y1="587.5" x2="788.50" y2="590.5" stroke="#222" stroke-width="1"/><line x1="792.50" y1="587.5" x2="792.50" y2="590.5" stroke="#222" stroke-width="1"/><line x1="796.50" y1="587.5" x2="796.50" y2="590.5" stroke="#222" stroke-width="1"/><line x1="800.50" y1="587.5" x2="800.50" y2="590.5" stroke="#222" stroke-width="1"/><line x1="805.50" y1="587.5" x2="805.50" y2="590.5" stroke="#222" stroke-width="1"/><text x="379.5" y="603.5" font-size="9" text-anchor="middle" font-weight="normal" fill="#222">00:36</text><text x="422.5" y="603.5" font-size="9" text-anchor="middle" font-weight="normal" fill="#222">01:24</text><text x="465.5" y="603.5" font-size="9" text-anchor="middle" font-weight="normal" fill="#222">02:12</text><text x="508.5" y="603.5" font-size="9" text-anchor="middle" font-weight="normal" fill="#222">03:00</text><text x="551.5" y="603.5" font-size="9" text-anchor="middle" font-weight="normal" fill="#222">03:48</text><text x="594.5" y="603.5" font-size="9" text-anchor="middle" font-weight="normal" fill="#222">04:36</text><text x="637.5" y="603.5" font-size="9" text-anchor="middle" font-weight="normal" fill="#222">05:24</text><text x="680.5" y="603.5" font-size="9" text-anchor="middle" font-weight="normal" fill="#222">06:12</text><text x="723.5" y="603.5" font-size="9" text-anchor="middle" font-weight="normal" fill="#222">07:00</text><text x="766.5" y="603.5" font-size="9" text-anchor="middle" font-weight="normal" fill="#222">07:48</text><text transform="translate(305.3,534) rotate(-90) scale(1,1.12)" font-size="11.6" font-weight="bold" text-anchor="middle" fill="#222">Mask Pressure</text><text x="364.6" y="472" font-size="8.45" text-anchor="start" font-weight="normal" fill="#111">Mask Pressure: 9.81</text><line x1="736" y1="467.5" x2="746" y2="467.5" stroke="#0000ff" stroke-width="1.8"/><text x="749" y="470.8" font-size="9.2" text-anchor="start" font-weight="normal" fill="#111" textLength="55.5" lengthAdjust="spacingAndGlyphs">Mask Pressure</text><line x1="788.5" y1="169" x2="788.5" y2="606" stroke="#00e000" stroke-width="1"/></svg>
<svg class="abs" style="left:300px;top:20px" width="40" height="32" viewBox="300 20 40 32">
<defs>
<radialGradient id="pinH" cx="0.6" cy="0.55" r="0.6"><stop offset="0" stop-color="#f8fff8"/><stop offset="0.3" stop-color="#90f0a0"/><stop offset="1" stop-color="#18c848"/></radialGradient>
<radialGradient id="pinB" cx="0.45" cy="0.45" r="0.65"><stop offset="0" stop-color="#38d060"/><stop offset="1" stop-color="#08a030"/></radialGradient>
</defs>
<line x1="310" y1="47.5" x2="313.5" y2="43.5" stroke="#808080" stroke-width="1.4"/>
<ellipse cx="317.3" cy="39.5" rx="7.6" ry="7.1" fill="url(#pinB)" transform="rotate(-35 317.3 39.5)"/>
<path d="M315 33 L322 27.5 L327 33 L320.5 39 Z" fill="#12b03c"/>
<ellipse cx="324.3" cy="31.2" rx="7.6" ry="6.2" fill="#0c9a32" transform="rotate(40 324.3 31.2)"/>
<ellipse cx="325.8" cy="29.6" rx="7.2" ry="5.8" fill="url(#pinH)" transform="rotate(40 325.8 29.6)"/>
</svg>
<div class="abs" style="left:299.8px;top:616px;width:0;height:0;border-left:3.6px solid transparent;border-right:3.6px solid transparent;border-top:6.5px solid #777"></div>
<div class="t" style="left:312.3px;top:613.5px;font-size:8.6px;color:#222">Flags</div>
<div class="abs" style="left:340px;top:611px;width:72px;height:16px;border:1px solid #a8a8a8;border-radius:4px;background:linear-gradient(#fdfdfd,#ececec)"></div>
<div class="abs" style="left:347px;top:617px;width:7px;height:5px;background:#111"></div><div class="abs" style="left:354px;top:617px;width:7px;height:5px;background:#3a8a1a"></div>
<div class="t" style="left:363px;top:614px;font-size:9.5px;color:#222">LL</div>
<div class="t" style="left:401px;top:612px;font-size:7px;color:#444;line-height:6px">&#9650;<br>&#9660;</div>
<div class="t" style="left:503px;top:612.5px;font-size:11.4px;color:#222;-webkit-text-stroke:0.1px currentColor">Feb 15 08:11:28.291</div>
<div class="abs" style="left:707.5px;top:617px;width:0;height:0;border-left:3.5px solid transparent;border-right:3.5px solid transparent;border-top:6px solid #777"></div>
<div class="t" style="left:720.5px;top:613.5px;font-size:8.4px;color:#222">Graphs</div>
<div class="abs" style="left:754px;top:611px;width:74px;height:16px;border:1px solid #a8a8a8;border-radius:4px;background:linear-gradient(#fdfdfd,#ececec)"></div>
<div class="abs" style="left:762px;top:617px;width:8px;height:5px;background:#111"></div><div class="abs" style="left:770px;top:617px;width:8px;height:5px;background:#3a8a1a"></div>
<div class="t" style="left:780.5px;top:614px;font-size:8.8px;color:#222;width:32px;overflow:hidden">Event Flags</div>
<div class="t" style="left:817px;top:612px;font-size:7px;color:#444;line-height:6px">&#9650;<br>&#9660;</div>
<div class="abs" style="left:840px;top:0;width:184px;height:634px;background:#a0bcfc"></div>
<div class="abs" style="left:840px;top:0;width:184px;height:25px;background:linear-gradient(#7c7cb4,#8290c8)"></div><div class="abs" style="left:840px;top:25px;width:184px;height:1px;background:#92a4e0"></div>
<div class="t" style="left:867px;top:8.5px;font-size:9.8px;font-weight:bold;font-style:italic;color:#f4f4ff">Navigation</div>
<svg class="abs" style="left:843px;top:2px" width="20" height="21" viewBox="0 0 20 21">
<ellipse cx="11" cy="12" rx="7" ry="5.5" fill="#f4f4f4" stroke="#555" stroke-width="0.6"/>
<rect x="7" y="16" width="2" height="4" fill="#111"/><rect x="12" y="16" width="2" height="4" fill="#111"/>
<ellipse cx="7" cy="8" rx="4" ry="4.5" fill="#d9a050" stroke="#444" stroke-width="0.6"/>
<path d="M4 7 L11 6" stroke="#333" stroke-width="1"/><path d="M5 13 L10 13" stroke="#d22" stroke-width="1.5"/>
<ellipse cx="8" cy="4" rx="3" ry="1.8" fill="#eee" stroke="#666" stroke-width="0.5"/>
</svg>
<div class="t" style="left:892px;width:80px;text-align:center;top:92.5px;font-size:8.6px;color:#111">Statistics</div>
<div class="t" style="left:892px;width:80px;text-align:center;top:170.0px;font-size:8.6px;color:#111">Daily</div>
<div class="t" style="left:892px;width:80px;text-align:center;top:247.5px;font-size:8.6px;color:#111">Overview</div>
<div class="t" style="left:892px;width:80px;text-align:center;top:325.0px;font-size:8.6px;color:#111">Oximetry</div>
<div class="t" style="left:892px;width:80px;text-align:center;top:403.0px;font-size:8.6px;color:#111">Import</div>
<div class="t" style="left:892px;width:80px;text-align:center;top:480.5px;font-size:8.6px;color:#111">Help</div>
<svg class="abs" style="left:900px;top:40px" width="64" height="50" viewBox="900 40 64 50">
<path d="M907.5 64 C916 56 923 50.5 932 50.5 C941 50.5 949 57 956 64.5 C949 72 941 80.5 932 80.5 C923 80.5 915 72 907.5 64 Z" fill="none" stroke="#1e1848" stroke-width="2.6" stroke-linejoin="miter"/>
<path d="M940 51.8 C944 53 947 55.5 949.5 58" fill="none" stroke="#d8d0f0" stroke-width="1.6" stroke-linecap="round" opacity="0.85"/>
<circle cx="932.5" cy="64" r="7.6" fill="none" stroke="#1e1848" stroke-width="1.5"/>
<circle cx="932.5" cy="64.5" r="4.9" fill="#1e1848"/>
<circle cx="930.3" cy="62.2" r="1.7" fill="#a0bcfc"/>
</svg>
<svg class="abs" style="left:900px;top:110px" width="64" height="60" viewBox="900 110 64 60">
<defs><linearGradient id="hnd" gradientUnits="userSpaceOnUse" x1="936" y1="152" x2="943" y2="145"><stop offset="0" stop-color="#f8f0e8"/><stop offset="0.5" stop-color="#f0c8a0"/><stop offset="1" stop-color="#fff8f0"/></linearGradient></defs>
<line x1="932" y1="141.5" x2="953.5" y2="163" stroke="#111" stroke-width="6.4" stroke-linecap="round"/>
<line x1="937.5" y1="147" x2="949" y2="158.5" stroke="url(#hnd)" stroke-width="5.2" stroke-linecap="butt"/>
<circle cx="922.5" cy="132" r="12.4" fill="#7890c8" stroke="#111" stroke-width="2.8"/>
<path d="M912 128 Q913 123 917 121" stroke="#c8d0e8" stroke-width="1" fill="none" opacity="0.8"/>
</svg>
<svg class="abs" style="left:900px;top:190px" width="64" height="60" viewBox="900 190 64 60">
<defs>
<linearGradient id="bG" x1="0" x2="1"><stop offset="0" stop-color="#30c030"/><stop offset="0.5" stop-color="#80f080"/><stop offset="1" stop-color="#28b028"/></linearGradient>
<linearGradient id="bY" x1="0" x2="1"><stop offset="0" stop-color="#e0d830"/><stop offset="0.5" stop-color="#ffff90"/><stop offset="1" stop-color="#d8d020"/></linearGradient>
<linearGradient id="bR" x1="0" x2="1"><stop offset="0" stop-color="#f03030"/><stop offset="0.4" stop-color="#ffb8b0"/><stop offset="1" stop-color="#e83020"/></linearGradient>
<linearGradient id="bP" x1="0" x2="1"><stop offset="0" stop-color="#5010c8"/><stop offset="0.5" stop-color="#9a70f8"/><stop offset="1" stop-color="#6020d0"/></linearGradient>
</defs>
<path d="M909.5 223 L916.5 221 L918 241.5 L911.5 242.5 Z" fill="url(#bG)"/>
<path d="M909.5 223 L916.5 221 L918 223 L911 225 Z" fill="#a8f8a0"/>
<path d="M916.5 219 L924 217 L925.5 243 L918 242 Z" fill="url(#bY)"/>
<path d="M916.5 219 L924 217 L925.5 219 L918 221 Z" fill="#ffffc0"/>
<path d="M923.5 196 L933 195 L934.5 244 L925.5 243 Z" fill="url(#bR)"/>
<path d="M923.5 196 L933 195 L934.5 197 L925 198 Z" fill="#ffd0c8"/>
<path d="M933.5 215 L942.5 213.5 L941.5 245 L934.5 244 Z" fill="url(#bP)"/>
<path d="M933.5 215 L942.5 213.5 L942 216 L934 217 Z" fill="#b090ff"/>
<path d="M942 207.5 L953.5 206 L950.5 245.5 L941.5 245 Z" fill="#ffffff"/>
<path d="M951.5 207 L953.5 206 L950.5 245.5 L949 245.5 Z" fill="#e0e0f0"/>
</svg>
<svg class="abs" style="left:905px;top:275px" width="50" height="48" viewBox="905 275 50 48">
<defs>
<linearGradient id="oxW" x1="0" y1="0" x2="0" y2="1"><stop offset="0" stop-color="#ffffff"/><stop offset="1" stop-color="#e6e8f0"/></linearGradient>
<linearGradient id="oxB" x1="0" y1="0" x2="1" y2="1"><stop offset="0" stop-color="#4a86d8"/><stop offset="1" stop-color="#1c4c9c"/></linearGradient>
</defs>
<path d="M911.5 295 L912.5 311 Q918 318 925 319.5 L948 307.5 L950.8 289.5 L928.5 302.5 Z" fill="url(#oxW)"/>
<path d="M911.2 292.3 L936 280.7 Q946 279.5 950.7 285.5 L950.7 289.8 L928.4 302.6 L911.2 295.8 Z" fill="url(#oxB)"/>
<path d="M923 290 L944 281.5 L948 285.5 L927 294.5 Z" fill="#101828"/>
<path d="M927 289 L933 286.5 M935 286 L941 283.5" stroke="#e8e040" stroke-width="1"/>
<path d="M928 292 L934 289.5 M936 288.5 L942 286" stroke="#40c8f0" stroke-width="1.2"/>
<circle cx="939" cy="303.5" r="3.2" fill="#3060b0"/>
<path d="M935 312 L946 306" stroke="#305090" stroke-width="1"/>
</svg>
<svg class="abs" style="left:905px;top:345px" width="55" height="60" viewBox="905 345 55 60">
<defs><linearGradient id="sdR" x1="0" y1="354" x2="0" y2="397" gradientUnits="userSpaceOnUse"><stop offset="0" stop-color="#ffffff"/><stop offset="0.42" stop-color="#ffffff"/><stop offset="0.62" stop-color="#e83040"/><stop offset="1" stop-color="#d81020"/></linearGradient></defs>
<path d="M914.4 351.2 L945 351.2 L952 358 L952 372 L951 373 L952 374 L952 399.8 L914.4 399.8 Z" fill="#3c3c3c"/>
<path d="M917 354 L944 354 L949 359 L949 397 L917 397 Z" fill="url(#sdR)"/>
<text x="935" y="370.5" font-family="'Liberation Sans',sans-serif" font-size="9.4" fill="#3a78d8" text-anchor="middle">CPAP</text>
<text x="933" y="392.5" font-family="'Liberation Sans',sans-serif" font-size="21" fill="#ffffff" text-anchor="middle" style="-webkit-text-stroke:0">SD</text>
<path d="M919 362 L923 362 M919 364.5 L923 364.5 M919 367 L923 367 M919 369.5 L923 369.5 M919 372 L923 372" stroke="#777" stroke-width="0.7"/>
<rect x="914" y="363" width="2" height="5" fill="#bbb"/>
</svg>
<svg class="abs" style="left:906px;top:426px" width="52" height="52" viewBox="0 0 52 52">
<defs><radialGradient id="lbR" gradientUnits="userSpaceOnUse" cx="26" cy="26.5" r="24"><stop offset="0.45" stop-color="#c01000"/><stop offset="0.62" stop-color="#ff6a5a"/><stop offset="0.8" stop-color="#f84030"/><stop offset="1" stop-color="#d81808"/></radialGradient></defs>
<circle cx="26" cy="26.5" r="17.5" fill="none" stroke="url(#lbR)" stroke-width="13"/>
<circle cx="26" cy="26.5" r="17.5" fill="none" stroke="#ffffff" stroke-width="13.4" stroke-dasharray="7.9 19.59" stroke-dashoffset="-9.8"/>
</svg>
<div class="abs" style="left:840px;top:583px;width:184px;height:26px;background:linear-gradient(#7e7eb4,#7f8ec4);border-bottom:1px solid #7a80b0"></div>
<div class="abs" style="left:840px;top:609px;width:184px;height:25px;background:linear-gradient(#7e7eb4,#7f8ec4)"></div>
<div class="t" style="left:859.8px;top:592px;font-size:10.3px;color:#404050;-webkit-text-stroke:0.1px currentColor">Bookmarks</div>
<div class="t" style="left:866px;top:617.5px;font-size:10.3px;color:#404050;-webkit-text-stroke:0.1px currentColor">Records</div>
<svg class="abs" style="left:846px;top:586px" width="8" height="20" viewBox="0 0 8 20"><path d="M1 1 L6 1 L6 19 L3.5 15.5 L1 19 Z" fill="#d01010" stroke="#901010" stroke-width="0.6"/></svg>
<svg class="abs" style="left:843px;top:611px" width="18" height="22" viewBox="0 0 18 22">
<path d="M3 2 L15 2 Q15 10 9 12 Q3 10 3 2 Z" fill="#e0c020" stroke="#a08010" stroke-width="0.6"/>
<path d="M1 3 Q1 8 4 8 M17 3 Q17 8 14 8" fill="none" stroke="#c0a018" stroke-width="1"/>
<rect x="8" y="12" width="2" height="4" fill="#c0a018"/>
<rect x="4" y="16" width="10" height="5" fill="#222"/><rect x="5" y="17" width="8" height="1.2" fill="#c0a018"/>
</svg>
</body></html>
